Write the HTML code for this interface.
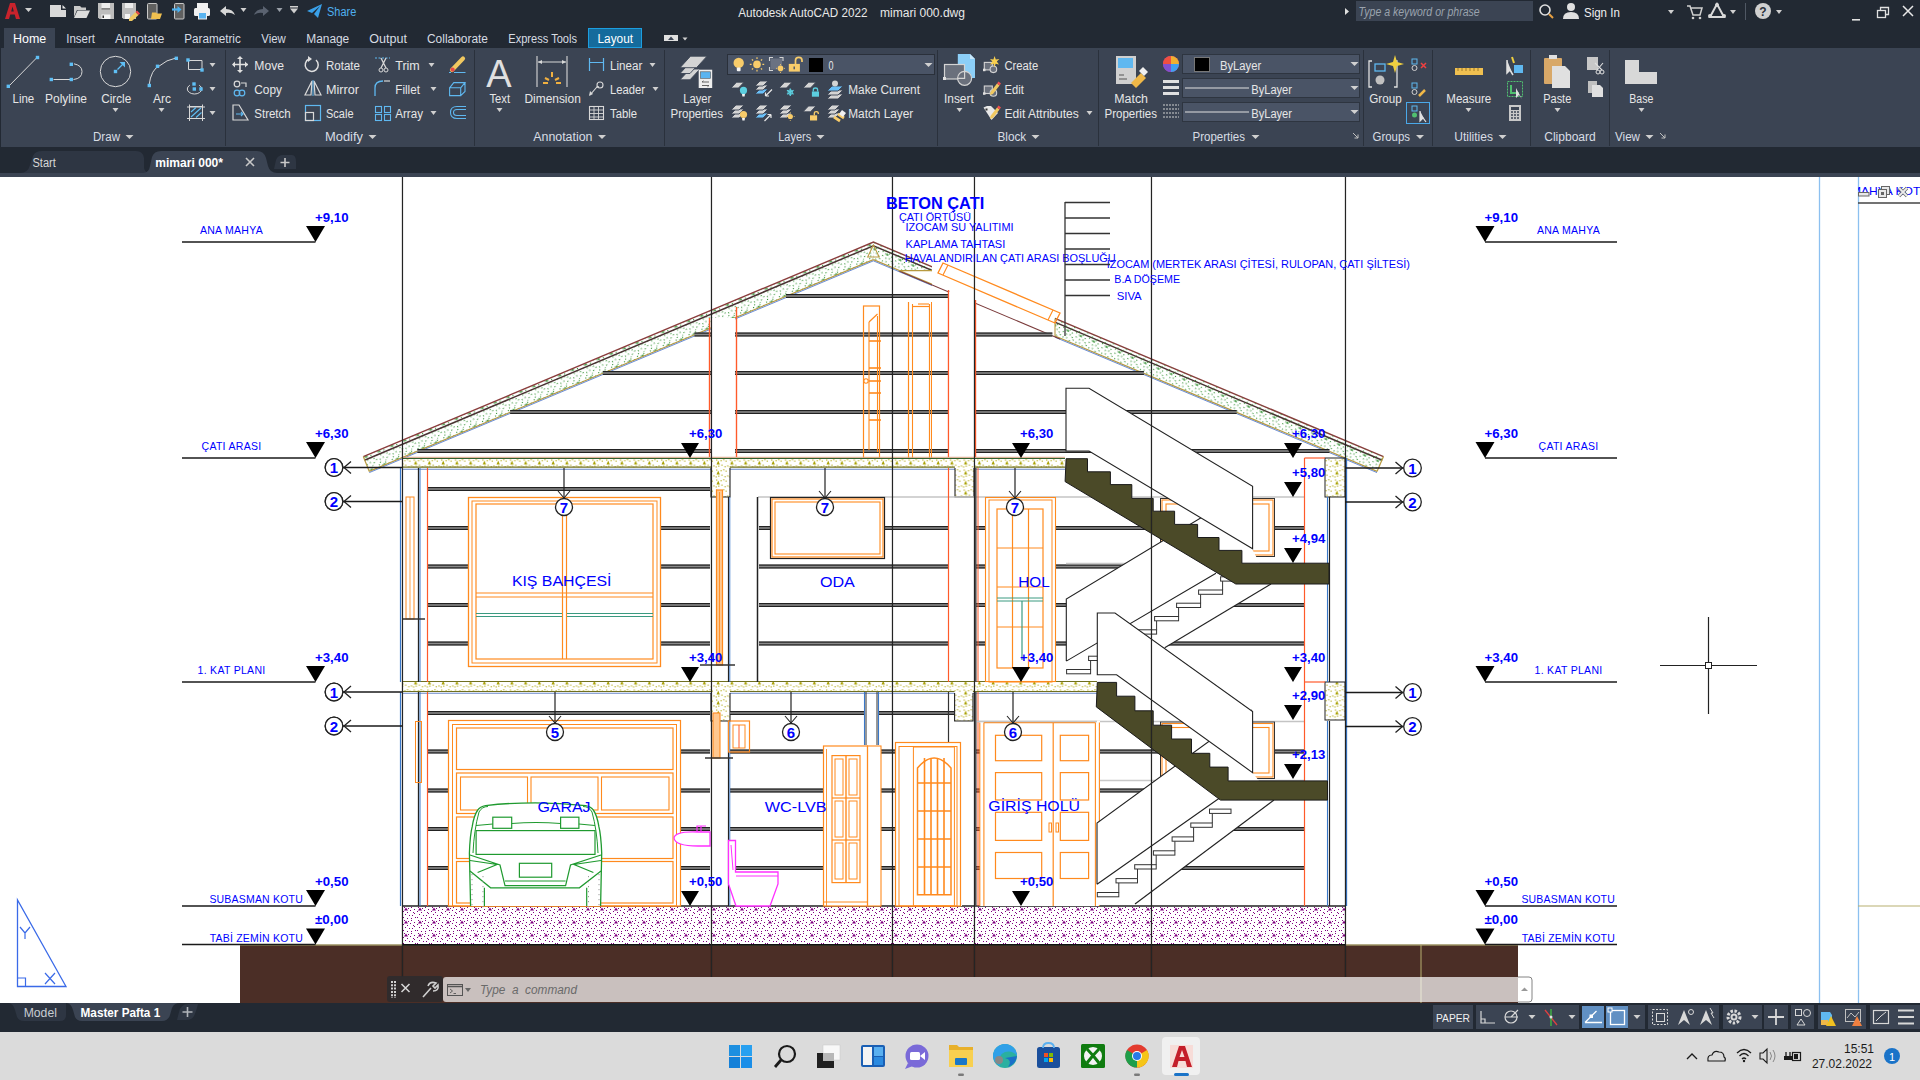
<!DOCTYPE html>
<html><head><meta charset="utf-8"><style>
html,body{margin:0;padding:0;width:1920px;height:1080px;overflow:hidden;background:#222933;}
svg{position:absolute;left:0;top:0;font-family:"Liberation Sans", sans-serif;}
</style></head><body>
<svg width="1920" height="1080" viewBox="0 0 1920 1080">
<g id="chrome"><rect x="0" y="0" width="1920" height="177" fill="#222933"/>
<rect x="1" y="48" width="1919" height="99" fill="#3b4453"/>
<rect x="4" y="28" width="51" height="20" fill="#3b4453"/>
<rect x="588.5" y="28.5" width="53" height="19" fill="#156b9c" stroke="#1c9ee0" stroke-width="1"/>
<rect x="0" y="173" width="1920" height="4" fill="#3b4453"/>
<path d="M20 173 Q28 173 30 165 L33 156 Q35 151 42 151 L136 151 Q143 151 144 158 L144 168 Q145 173 150 173 Z" fill="#2e3643"/>
<path d="M143 173 Q149 173 150 166 L152 157 Q154 151 161 151 L257 151 Q264 151 266 158 L268 166 Q270 173 277 173 Z" fill="#3b4453"/>
<path d="M274 169 L276 160 Q278 155 283 155 L292 155 Q296 155 296 162 L296 169 Z" fill="#2e3643"/>
<text x="32.5" y="167" font-size="12.3" fill="#d8d8d8" font-weight="normal" font-style="normal" textLength="23.30" lengthAdjust="spacingAndGlyphs">Start</text>
<text x="155.3" y="167" font-size="12.3" fill="#ffffff" font-weight="bold" font-style="normal" textLength="67.70" lengthAdjust="spacingAndGlyphs">mimari 000*</text>
<path d="M246 158 L254 166 M254 158 L246 166" stroke="#c8c8c8" stroke-width="1.6"/>
<path d="M285 158 L285 167 M280.5 162.5 L289.5 162.5" stroke="#c8c8c8" stroke-width="1.6"/>
<path d="M5 19 L10 3 L15 3 L20 19 L16 19 L14.7 14.5 L10.3 14.5 L9 19 Z M11.2 11.5 L13.8 11.5 L12.5 6.5 Z" fill="#c8232c"/>
<path d="M25.0 8.0L32.0 8.0L28.5 12.0Z" fill="#d0d0d0"/>
<path d="M50 5 L61 5 L61 10 L66 10 L66 17 L50 17 Z" fill="#d9d9d9"/><path d="M62.5 5 L66 8.5 L62.5 8.5 Z" fill="#e8e8e8"/>
<path d="M74 6 L80 6 L81.5 7.5 L86 7.5 L86 10 L77 10 L74 17 Z" fill="#c8c8c8"/><path d="M77.5 10.5 L90 10.5 L86.5 18 L74 18 Z" fill="#dcdcdc"/>
<path d="M98 3 L114 3 L114 19 L99.5 19 L98 17.5 Z" fill="#bdbdbd"/><rect x="101.5" y="3" width="8.5" height="5.5" fill="#ececec"/><rect x="101.5" y="14.5" width="9" height="4.5" fill="#f4f4f4"/><rect x="102.5" y="15.5" width="1.5" height="2.5" fill="#333"/><rect x="101.5" y="8.5" width="8.5" height="0.8" fill="#333"/>
<path d="M122 3 L136 3 L136 19 L123.5 19 L122 17.5 Z" fill="#bdbdbd"/><rect x="125" y="3" width="8" height="5" fill="#ececec"/><rect x="125" y="14" width="5" height="5" fill="#f4f4f4"/><path d="M129 18.5 L135.5 12 L138.5 15 L132 21 L129 21 Z" fill="#f0c860"/><path d="M135.5 12 L137 10.5 L140 13.5 L138.5 15 Z" fill="#e84848"/>
<rect x="147.5" y="3.5" width="9.5" height="15.5" rx="1" fill="#606060" stroke="#c8c8c8" stroke-width="1"/><path d="M152 12.5 L156 12.5 L157 13.5 L162 13.5 L160 19 L151 19 Z" fill="#f0c050"/>
<rect x="174.5" y="3.5" width="9.5" height="15.5" rx="1" fill="#606060" stroke="#c8c8c8" stroke-width="1"/><path d="M172 9.5 L179 9.5" stroke="#4ab0f0" stroke-width="2.2"/><path d="M177.5 6 L181.5 9.5 L177.5 13 Z" fill="#4ab0f0"/>
<rect x="197" y="3" width="11" height="5" fill="#f0f0f0"/><rect x="194" y="8" width="16" height="8" rx="1.5" fill="#f0f0f0"/><rect x="198.5" y="12.5" width="8" height="6.5" fill="#5ab4f0" stroke="#f0f0f0" stroke-width="1"/>
<path d="M220 11 L226 6 L226 9 Q233 9 235 15 Q231 12 226 13 L226 16 Z" fill="#d8d8d8"/>
<path d="M240.5 8.0L246.5 8.0L243.5 12.0Z" fill="#d0d0d0"/>
<path d="M269 11 L263 6 L263 9 Q256 9 254 15 Q258 12 263 13 L263 16 Z" fill="#5a6270"/>
<path d="M276.5 8.0L282.5 8.0L279.5 12.0Z" fill="#9aa0a8"/>
<rect x="290" y="6" width="8" height="1.5" fill="#d0d0d0"/><path d="M290.0 8.5L298.0 8.5L294 13.5Z" fill="#d0d0d0"/>
<path d="M307 11 L322 4 L318 18 L314 14 L320 6 L312 13 Z" fill="#3aa0e8"/>
<text x="327" y="16" font-size="12.3" fill="#4fb0f0" font-weight="normal" font-style="normal" textLength="29.25" lengthAdjust="spacingAndGlyphs">Share</text>
<text x="738.25" y="16.5" font-size="12.3" fill="#e8e8e8" font-weight="normal" font-style="normal" textLength="129.25" lengthAdjust="spacingAndGlyphs">Autodesk AutoCAD 2022</text>
<text x="880" y="16.5" font-size="12.3" fill="#e8e8e8" font-weight="normal" font-style="normal" textLength="85.00" lengthAdjust="spacingAndGlyphs">mimari 000.dwg</text>
<path d="M1345 8 L1349 11.5 L1345 15 Z" fill="#e0e0e0"/>
<rect x="1356" y="1" width="177" height="20" fill="#3b4453"/>
<text x="1358.6" y="15.5" font-size="12" fill="#9aa3ae" font-weight="normal" font-style="italic" textLength="121.10" lengthAdjust="spacingAndGlyphs">Type a keyword or phrase</text>
<circle cx="1545" cy="10" r="5" fill="none" stroke="#e0e0e0" stroke-width="1.6"/><path d="M1549 14 L1553 18" stroke="#e8a040" stroke-width="2"/>
<circle cx="1571" cy="7" r="4" fill="#e0e0e0"/><path d="M1563 19 Q1563 12 1571 12 Q1579 12 1579 19 Z" fill="#e0e0e0"/>
<text x="1584" y="16.5" font-size="12.3" fill="#f0f0f0" font-weight="normal" font-style="normal" textLength="35.80" lengthAdjust="spacingAndGlyphs">Sign In</text>
<path d="M1668.0 10.0L1674.0 10.0L1671 14.0Z" fill="#d0d0d0"/>
<path d="M1687 6 L1690 6 L1693 15 L1700 15 L1702 8 L1691 8" stroke="#d0d0d0" stroke-width="1.5" fill="none"/><circle cx="1693" cy="18" r="1.3" fill="#d0d0d0"/><circle cx="1700" cy="18" r="1.3" fill="#d0d0d0"/>
<path d="M1717 4 L1710 17 L1724 17 Z" stroke="#d8d8d8" stroke-width="2" fill="none"/><circle cx="1717" cy="5" r="2" fill="#d8d8d8"/><circle cx="1710" cy="16" r="2" fill="#d8d8d8"/><circle cx="1724" cy="16" r="2" fill="#d8d8d8"/>
<path d="M1730.0 10.0L1736.0 10.0L1733 14.0Z" fill="#d0d0d0"/>
<rect x="1745" y="3" width="1" height="17" fill="#505864"/>
<circle cx="1763" cy="11" r="8" fill="#d0d0d0"/><text x="1763" y="16" font-size="12" fill="#2a313c" font-weight="bold" font-style="normal" text-anchor="middle" >?</text>
<path d="M1776.0 10.0L1782.0 10.0L1779 14.0Z" fill="#d0d0d0"/>
<rect x="1852" y="19" width="8" height="1.6" fill="#e0e0e0"/>
<rect x="1877.5" y="10.5" width="8" height="7" fill="none" stroke="#e0e0e0" stroke-width="1.3"/><path d="M1880.5 10.5 L1880.5 7.5 L1888.5 7.5 L1888.5 14.5 L1885.5 14.5" fill="none" stroke="#e0e0e0" stroke-width="1.3"/>
<path d="M1903 6 L1913 16 M1913 6 L1903 16" stroke="#e8e8e8" stroke-width="1.5"/>
<text x="13" y="42.5" font-size="12.3" fill="#ffffff" font-weight="normal" font-style="normal" textLength="33.25" lengthAdjust="spacingAndGlyphs">Home</text>
<text x="66.25" y="42.5" font-size="12.3" fill="#d6dbe2" font-weight="normal" font-style="normal" textLength="28.75" lengthAdjust="spacingAndGlyphs">Insert</text>
<text x="115" y="42.5" font-size="12.3" fill="#d6dbe2" font-weight="normal" font-style="normal" textLength="49.25" lengthAdjust="spacingAndGlyphs">Annotate</text>
<text x="184.25" y="42.5" font-size="12.3" fill="#d6dbe2" font-weight="normal" font-style="normal" textLength="56.50" lengthAdjust="spacingAndGlyphs">Parametric</text>
<text x="261.25" y="42.5" font-size="12.3" fill="#d6dbe2" font-weight="normal" font-style="normal" textLength="24.50" lengthAdjust="spacingAndGlyphs">View</text>
<text x="306.25" y="42.5" font-size="12.3" fill="#d6dbe2" font-weight="normal" font-style="normal" textLength="43.00" lengthAdjust="spacingAndGlyphs">Manage</text>
<text x="369.25" y="42.5" font-size="12.3" fill="#d6dbe2" font-weight="normal" font-style="normal" textLength="37.75" lengthAdjust="spacingAndGlyphs">Output</text>
<text x="427" y="42.5" font-size="12.3" fill="#d6dbe2" font-weight="normal" font-style="normal" textLength="61.00" lengthAdjust="spacingAndGlyphs">Collaborate</text>
<text x="508.25" y="42.5" font-size="12.3" fill="#d6dbe2" font-weight="normal" font-style="normal" textLength="68.75" lengthAdjust="spacingAndGlyphs">Express Tools</text>
<text x="597.5" y="42.5" font-size="12.3" fill="#ffffff" font-weight="normal" font-style="normal" textLength="35.50" lengthAdjust="spacingAndGlyphs">Layout</text>
<rect x="664" y="35" width="14" height="6" fill="#e0e0e0"/><path d="M668 40 L671 36.5 L674 40 Z" fill="#3b4453"/>
<path d="M682.5 37.5L687.5 37.5L685 40.5Z" fill="#d0d0d0"/></g>
<g id="ribbon"><rect x="225" y="50" width="1" height="96" fill="#2a313c"/>
<rect x="474" y="50" width="1" height="96" fill="#2a313c"/>
<rect x="664" y="50" width="1" height="96" fill="#2a313c"/>
<rect x="937" y="50" width="1" height="96" fill="#2a313c"/>
<rect x="1098" y="50" width="1" height="96" fill="#2a313c"/>
<rect x="1363" y="50" width="1" height="96" fill="#2a313c"/>
<rect x="1432" y="50" width="1" height="96" fill="#2a313c"/>
<rect x="1530" y="50" width="1" height="96" fill="#2a313c"/>
<rect x="1609" y="50" width="1" height="96" fill="#2a313c"/>
<text x="93" y="141.25" font-size="12.3" fill="#d8dde4" font-weight="normal" font-style="normal" textLength="27.00" lengthAdjust="spacingAndGlyphs">Draw</text>
<text x="325" y="141.25" font-size="12.3" fill="#d8dde4" font-weight="normal" font-style="normal" textLength="38.00" lengthAdjust="spacingAndGlyphs">Modify</text>
<text x="533.25" y="141.25" font-size="12.3" fill="#d8dde4" font-weight="normal" font-style="normal" textLength="59.25" lengthAdjust="spacingAndGlyphs">Annotation</text>
<text x="778.25" y="141.25" font-size="12.3" fill="#d8dde4" font-weight="normal" font-style="normal" textLength="33.00" lengthAdjust="spacingAndGlyphs">Layers</text>
<text x="997.5" y="141.25" font-size="12.3" fill="#d8dde4" font-weight="normal" font-style="normal" textLength="28.75" lengthAdjust="spacingAndGlyphs">Block</text>
<text x="1192.5" y="141.25" font-size="12.3" fill="#d8dde4" font-weight="normal" font-style="normal" textLength="52.50" lengthAdjust="spacingAndGlyphs">Properties</text>
<text x="1372.5" y="141.25" font-size="12.3" fill="#d8dde4" font-weight="normal" font-style="normal" textLength="37.50" lengthAdjust="spacingAndGlyphs">Groups</text>
<text x="1454.25" y="141.25" font-size="12.3" fill="#d8dde4" font-weight="normal" font-style="normal" textLength="38.75" lengthAdjust="spacingAndGlyphs">Utilities</text>
<text x="1544.25" y="141.25" font-size="12.3" fill="#d8dde4" font-weight="normal" font-style="normal" textLength="51.50" lengthAdjust="spacingAndGlyphs">Clipboard</text>
<text x="1615" y="141.25" font-size="12.3" fill="#d8dde4" font-weight="normal" font-style="normal" textLength="25.00" lengthAdjust="spacingAndGlyphs">View</text>
<path d="M125.5 135.0L133.5 135.0L129.5 139.0Z" fill="#d0d0d0"/>
<path d="M368.5 135.0L376.5 135.0L372.5 139.0Z" fill="#d0d0d0"/>
<path d="M598.0 135.0L606.0 135.0L602 139.0Z" fill="#d0d0d0"/>
<path d="M816.5 135.0L824.5 135.0L820.5 139.0Z" fill="#d0d0d0"/>
<path d="M1031.5 135.0L1039.5 135.0L1035.5 139.0Z" fill="#d0d0d0"/>
<path d="M1251.5 135.0L1259.5 135.0L1255.5 139.0Z" fill="#d0d0d0"/>
<path d="M1416.0 135.0L1424.0 135.0L1420 139.0Z" fill="#d0d0d0"/>
<path d="M1498.5 135.0L1506.5 135.0L1502.5 139.0Z" fill="#d0d0d0"/>
<path d="M1645.5 135.0L1653.5 135.0L1649.5 139.0Z" fill="#d0d0d0"/>
<path d="M1353 133 L1358 138 M1354.5 138 L1358 138 L1358 134.5" stroke="#c0c0c0" stroke-width="1" fill="none"/>
<path d="M1660 133 L1665 138 M1661.5 138 L1665 138 L1665 134.5" stroke="#c0c0c0" stroke-width="1" fill="none"/>
<path d="M8.5 86.5 L36.5 58" stroke="#d8d8d8" stroke-width="1"/><rect x="6.6000000000000005" y="84.6" width="3.4" height="3.4" fill="#5fbff5"/><rect x="35.8" y="55.8" width="3.4" height="3.4" fill="#5fbff5"/>
<text x="12.5" y="103.25" font-size="12.3" fill="#e6e6e6" font-weight="normal" font-style="normal" textLength="21.75" lengthAdjust="spacingAndGlyphs">Line</text>
<path d="M53.5 79.5 L70.5 79.5 M74 63.8 Q82 65.5 82 71.5 Q82 78.5 73.5 79.5" stroke="#d8d8d8" stroke-width="1" fill="none"/><rect x="49.599999999999994" y="77.8" width="3.4" height="3.4" fill="#5fbff5"/><rect x="69.6" y="77.8" width="3.4" height="3.4" fill="#5fbff5"/><rect x="69.6" y="62.599999999999994" width="3.4" height="3.4" fill="#5fbff5"/>
<text x="45" y="103.25" font-size="12.3" fill="#e6e6e6" font-weight="normal" font-style="normal" textLength="42.00" lengthAdjust="spacingAndGlyphs">Polyline</text>
<circle cx="115.5" cy="71.5" r="15.2" fill="none" stroke="#d8d8d8" stroke-width="1"/><rect x="113.8" y="69.8" width="3.4" height="3.4" fill="#5fbff5"/><path d="M117.5 69.5 L123.5 63.5" stroke="#5fbff5" stroke-width="1.2"/><path d="M119.5 62 L125 62 L125 67.5 Z" fill="#5fbff5"/>
<text x="101.25" y="103.25" font-size="12.3" fill="#e6e6e6" font-weight="normal" font-style="normal" textLength="30.00" lengthAdjust="spacingAndGlyphs">Circle</text>
<path d="M112.5 108.0L118.5 108.0L115.5 112.0Z" fill="#d0d0d0"/>
<path d="M149 85.5 Q151 69 160 65.5 Q166 60 176 58" stroke="#d8d8d8" stroke-width="1" fill="none"/><rect x="147.60000000000002" y="83.8" width="3.4" height="3.4" fill="#5fbff5"/><rect x="155.8" y="64.6" width="3.4" height="3.4" fill="#5fbff5"/><rect x="174.60000000000002" y="56.599999999999994" width="3.4" height="3.4" fill="#5fbff5"/>
<text x="153" y="103.25" font-size="12.3" fill="#e6e6e6" font-weight="normal" font-style="normal" textLength="18.00" lengthAdjust="spacingAndGlyphs">Arc</text>
<path d="M158.5 108.0L164.5 108.0L161.5 112.0Z" fill="#d0d0d0"/>
<path d="M188.5 60.5 L202 60.5 L202 69.5 L188.5 69.5 Z" fill="none" stroke="#d8d8d8" stroke-width="1"/><rect x="186.3" y="58.3" width="3.4" height="3.4" fill="#5fbff5"/><rect x="200.3" y="68.3" width="3.4" height="3.4" fill="#5fbff5"/>
<path d="M209.5 63.0L215.5 63.0L212.5 67.0Z" fill="#d0d0d0"/>
<ellipse cx="194.5" cy="89" rx="7.2" ry="5" fill="none" stroke="#d8d8d8" stroke-width="1"/><rect x="190" y="83" width="9" height="3" fill="#3b4453"/><rect x="192.3" y="82.3" width="3.4" height="3.4" fill="#5fbff5"/><rect x="192.60000000000002" y="87.3" width="3.4" height="3.4" fill="#5fbff5"/><rect x="199.3" y="87.3" width="3.4" height="3.4" fill="#5fbff5"/>
<path d="M209.5 87.0L215.5 87.0L212.5 91.0Z" fill="#d0d0d0"/>
<rect x="189.5" y="106.5" width="13" height="12" fill="none" stroke="#d8d8d8" stroke-width="1"/><path d="M187 107 L205 107 M187 118.5 L205 118.5 M189.5 104.5 L189.5 121 M202.5 104.5 L202.5 121" stroke="#d8d8d8" stroke-width="1"/><path d="M191 112 L196 107.5 M191 117 L201 108 M196 117.5 L201.5 112.5" stroke="#5fbff5" stroke-width="1.1"/>
<path d="M209.5 111.0L215.5 111.0L212.5 115.0Z" fill="#d0d0d0"/>
<text x="254.25" y="69.5" font-size="12.3" fill="#e6e6e6" font-weight="normal" font-style="normal" textLength="29.75" lengthAdjust="spacingAndGlyphs">Move</text>
<text x="254.25" y="93.5" font-size="12.3" fill="#e6e6e6" font-weight="normal" font-style="normal" textLength="27.75" lengthAdjust="spacingAndGlyphs">Copy</text>
<text x="254.25" y="117.5" font-size="12.3" fill="#e6e6e6" font-weight="normal" font-style="normal" textLength="36.50" lengthAdjust="spacingAndGlyphs">Stretch</text>
<text x="326" y="69.5" font-size="12.3" fill="#e6e6e6" font-weight="normal" font-style="normal" textLength="34.00" lengthAdjust="spacingAndGlyphs">Rotate</text>
<text x="326" y="93.5" font-size="12.3" fill="#e6e6e6" font-weight="normal" font-style="normal" textLength="33.00" lengthAdjust="spacingAndGlyphs">Mirror</text>
<text x="326" y="117.5" font-size="12.3" fill="#e6e6e6" font-weight="normal" font-style="normal" textLength="27.50" lengthAdjust="spacingAndGlyphs">Scale</text>
<text x="395.25" y="69.5" font-size="12.3" fill="#e6e6e6" font-weight="normal" font-style="normal" textLength="24.50" lengthAdjust="spacingAndGlyphs">Trim</text>
<text x="395.25" y="93.5" font-size="12.3" fill="#e6e6e6" font-weight="normal" font-style="normal" textLength="24.75" lengthAdjust="spacingAndGlyphs">Fillet</text>
<text x="395.25" y="117.5" font-size="12.3" fill="#e6e6e6" font-weight="normal" font-style="normal" textLength="27.75" lengthAdjust="spacingAndGlyphs">Array</text>
<path d="M428.5 63.0L434.5 63.0L431.5 67.0Z" fill="#d0d0d0"/>
<path d="M430.5 87.0L436.5 87.0L433.5 91.0Z" fill="#d0d0d0"/>
<path d="M430.5 111.0L436.5 111.0L433.5 115.0Z" fill="#d0d0d0"/>
<path d="M240 57 L240 72 M233 64.5 L248 64.5" stroke="#e0e0e0" stroke-width="1.6"/><path d="M237 59 L240 56 L243 59 Z M237 70 L240 73 L243 70 Z M235 61.5 L232 64.5 L235 67.5 Z M245 61.5 L248 64.5 L245 67.5 Z" fill="#e0e0e0"/>
<circle cx="237" cy="84" r="2.8" fill="none" stroke="#d8d8d8" stroke-width="1.2"/><circle cx="237" cy="93" r="2.8" fill="none" stroke="#5fb8f0" stroke-width="1.2"/><circle cx="242" cy="93" r="2.8" fill="none" stroke="#5fb8f0" stroke-width="1.2"/><path d="M241 83 L246 83 L246 87" stroke="#d8d8d8" stroke-width="1.2" fill="none"/>
<path d="M233 105 L239 105 L248 120 L233 120 Z" fill="none" stroke="#d8d8d8" stroke-width="1.2"/><path d="M236 114 L243 114 M241 112 L243 114 L241 116" stroke="#5fb8f0" stroke-width="1.2" fill="none"/>
<path d="M316 60 A6.5 6.5 0 1 1 309 59" stroke="#e0e0e0" stroke-width="1.5" fill="none"/><path d="M308 56 L312 59 L308 62 Z" fill="#e0e0e0"/>
<path d="M312 81 L305 95 L311 95 Z M314 81 L321 95 L315 95 Z" fill="none" stroke="#d8d8d8" stroke-width="1.2"/><path d="M313 80 L313 96" stroke="#5fb8f0" stroke-width="1"/>
<rect x="305.5" y="105.5" width="15" height="15" fill="none" stroke="#5fb8f0" stroke-width="1.2"/><rect x="305.5" y="112.5" width="8" height="8" fill="none" stroke="#d8d8d8" stroke-width="1.2"/>
<path d="M375 58 L390 58" stroke="#5fb8f0" stroke-width="1" stroke-dasharray="2 1.5"/><path d="M381 58 L386 68 M386 58 L381 68" stroke="#d8d8d8" stroke-width="1.3"/><circle cx="381" cy="70" r="2" fill="none" stroke="#d8d8d8"/><circle cx="386" cy="70" r="2" fill="none" stroke="#d8d8d8"/>
<path d="M375 96 L375 88 Q375 81 383 81" stroke="#5fb8f0" stroke-width="1.3" fill="none"/><path d="M384 81 L390 81" stroke="#d8d8d8" stroke-width="1.2"/>
<rect x="375.5" y="106.5" width="6" height="6" fill="none" stroke="#5fb8f0" stroke-width="1.1"/><rect x="384.5" y="106.5" width="6" height="6" fill="none" stroke="#5fb8f0" stroke-width="1.1"/><rect x="375.5" y="114.5" width="6" height="6" fill="none" stroke="#5fb8f0" stroke-width="1.1"/><rect x="384.5" y="114.5" width="6" height="6" fill="none" stroke="#5fb8f0" stroke-width="1.1"/>
<path d="M452 70 L463 58.5" stroke="#f0c860" stroke-width="4.2" stroke-linecap="round"/><circle cx="452.6" cy="69.6" r="2.1" fill="#e84848"/><path d="M449 72.5 L451 72.5 M454 72.5 L465.5 72.5" stroke="#5fb8f0" stroke-width="1"/>
<path d="M449.6 87.8 L460.7 87.8 L460.7 95.6 L449.6 95.6 Z M449.6 87.8 L453.8 82.6 L465 82.6 L460.7 87.8 M465 82.6 L465 91.5 L460.7 95.6" fill="none" stroke="#5fb8f0" stroke-width="1.1"/>
<path d="M466 106.5 L457 106.5 Q450.5 106.5 450.5 112.5 Q450.5 118.5 457 118.5 L466 118.5 M466 109.5 L457 109.5 Q453.5 109.5 453.5 112.5 Q453.5 115.5 457 115.5 L466 115.5" fill="none" stroke="#5fb8f0" stroke-width="1.1"/>
<text x="499" y="87" font-size="38" fill="#e0e0e0" font-weight="normal" font-style="normal" text-anchor="middle" >A</text>
<text x="489.5" y="103.25" font-size="12.3" fill="#e6e6e6" font-weight="normal" font-style="normal" textLength="20.50" lengthAdjust="spacingAndGlyphs">Text</text>
<path d="M496.5 108.0L502.5 108.0L499.5 112.0Z" fill="#d0d0d0"/>
<path d="M537 56 L537 87 M567 56 L567 87 M538 62 L566 62" stroke="#d8d8d8" stroke-width="1.1"/><path d="M538 62 L542 60 L542 64 Z M566 62 L562 60 L562 64 Z" fill="#d8d8d8"/>
<path d="M552 72 L552 77 M545 78 L549 80 M559 78 L555 80 M543 83 L548 83 M561 83 L556 83" stroke="#f0b040" stroke-width="2"/>
<text x="524.5" y="103.25" font-size="12.3" fill="#e6e6e6" font-weight="normal" font-style="normal" textLength="56.25" lengthAdjust="spacingAndGlyphs">Dimension</text>
<path d="M589.5 58 L589.5 71 M603.5 58 L603.5 71 M590 62.5 L603 62.5" stroke="#5fb8f0" stroke-width="1.2"/>
<text x="610" y="69.5" font-size="12.3" fill="#e6e6e6" font-weight="normal" font-style="normal" textLength="32.25" lengthAdjust="spacingAndGlyphs">Linear</text>
<path d="M649.5 63.0L655.5 63.0L652.5 67.0Z" fill="#d0d0d0"/>
<path d="M590 95 L596 88 Q597 86 599 87" stroke="#d8d8d8" stroke-width="1.1" fill="none"/><circle cx="600" cy="85" r="3" fill="none" stroke="#d8d8d8" stroke-width="1.1"/><path d="M589 96 L590 91 L593 94 Z" fill="#d8d8d8"/>
<text x="610" y="93.5" font-size="12.3" fill="#e6e6e6" font-weight="normal" font-style="normal" textLength="35.00" lengthAdjust="spacingAndGlyphs">Leader</text>
<path d="M652.5 87.0L658.5 87.0L655.5 91.0Z" fill="#d0d0d0"/>
<rect x="589.5" y="106.5" width="14" height="13" fill="none" stroke="#d8d8d8" stroke-width="1.1"/><path d="M590 110 L603 110 M590 113.5 L603 113.5 M590 117 L603 117 M594 107 L594 119 M598.5 107 L598.5 119" stroke="#d8d8d8" stroke-width="0.9"/>
<text x="610" y="117.5" font-size="12.3" fill="#e6e6e6" font-weight="normal" font-style="normal" textLength="27.00" lengthAdjust="spacingAndGlyphs">Table</text>
<path d="M680 79.8 L690 69 L700 69 L690 79.8 Z" fill="#d4d4d4" stroke="#3b4453" stroke-width="0.9"/><path d="M680 73.5 L690 62.5 L700 62.5 L690 73.5 Z" fill="#d4d4d4" stroke="#3b4453" stroke-width="0.9"/><path d="M680 67.7 L690.5 56.2 L707 56.2 L696.5 67.7 Z" fill="#d4d4d4" stroke="#3b4453" stroke-width="0.9"/>
<rect x="698.7" y="69.7" width="13.5" height="18.3" fill="#eeeeee"/><rect x="700.5" y="71.8" width="10" height="6.5" fill="#5ab4f0" stroke="#555" stroke-width="0.6"/><path d="M702 82 L709 82 M702 85.5 L709 85.5" stroke="#555" stroke-width="0.9"/><path d="M702 82 L703.5 80.8 M709 85.5 L707.5 86.7" stroke="#555" stroke-width="0.9"/>
<text x="683.25" y="103.25" font-size="12.3" fill="#e6e6e6" font-weight="normal" font-style="normal" textLength="28.00" lengthAdjust="spacingAndGlyphs">Layer</text>
<text x="670.5" y="118" font-size="12.3" fill="#e6e6e6" font-weight="normal" font-style="normal" textLength="52.50" lengthAdjust="spacingAndGlyphs">Properties</text>
<rect x="727.5" y="54.5" width="207" height="20" fill="#4a5466" stroke="#2a303a" stroke-width="1"/>
<circle cx="738.7" cy="62.9" r="5.2" fill="#f8cc6a"/><rect x="736.8" y="67.5" width="3.8" height="3.8" rx="1" fill="#f4f4f4"/>
<circle cx="757" cy="64.4" r="3.8" fill="#f8cc6a"/><path d="M757 57.2 L757 59 M757 69.8 L757 71.6 M749.8 64.4 L751.6 64.4 M762.4 64.4 L764.2 64.4 M751.9 59.3 L753.1 60.5 M762.1 59.3 L760.9 60.5 M751.9 69.5 L753.1 68.3 M762.1 69.5 L760.9 68.3" stroke="#f8cc6a" stroke-width="1.2"/>
<rect x="770.5" y="58.5" width="11.5" height="11" fill="#6a7282"/><path d="M769.5 61 L769.5 57.5 L773 57.5 M779.5 57.5 L783 57.5 L783 61 M769.5 67 L769.5 70.5 L773 70.5" fill="none" stroke="#d4d4d4" stroke-width="1.1"/><circle cx="780.5" cy="68.4" r="2.8" fill="#f8cc6a"/><path d="M780.5 64 L780.5 64.8 M780.5 72 L780.5 72.8 M776.1 68.4 L776.9 68.4 M784.1 68.4 L784.9 68.4" stroke="#f8cc6a" stroke-width="1"/>
<rect x="788.8" y="63.9" width="11.1" height="7.7" fill="#f8cc6a"/><path d="M795.5 64 L795.5 60.5 Q795.5 57.3 798.8 57.3 Q802 57.3 802 60.5 L802 62" fill="none" stroke="#f8cc6a" stroke-width="1.7"/><rect x="793.5" y="66.5" width="1.4" height="2.8" fill="#4a5466"/>
<rect x="809" y="58" width="14" height="14" fill="#000"/>
<text x="828.5" y="69.5" font-size="12.3" fill="#e6e6e6" font-weight="normal" font-style="normal" textLength="5.00" lengthAdjust="spacingAndGlyphs">0</text>
<path d="M924.5 63.0L932.5 63.0L928.5 67.0Z" fill="#d0d0d0"/>
<path d="M731 88.0 L736.5 82.2 L744 82.2 L738.5 88.0 Z" fill="#d4d4d4" stroke="#3b4453" stroke-width="0.9"/><circle cx="743.5" cy="90.4" r="3.6" fill="#5ccfe0"/><path d="M742 94 L745 94 L744.6 96.5 L742.4 96.5 Z" fill="#f4f4f4"/>
<path d="M755 94 L760 89 L768 89 L763 94 Z" fill="#6ac0f8" stroke="#3b4453" stroke-width="0.9"/><path d="M755 90 L760 85 L768 85 L763 90 Z" fill="#d4d4d4" stroke="#3b4453" stroke-width="0.9"/><path d="M755 86 L760 81 L768 81 L763 86 Z" fill="#d4d4d4" stroke="#3b4453" stroke-width="0.9"/><path d="M772 89.5 L765.5 96 M765.5 96 L765.5 92.5 M765.5 96 L769 96" stroke="#e8e8e8" stroke-width="1.2" fill="none"/>
<path d="M779 88.0 L784.5 82.2 L792 82.2 L786.5 88.0 Z" fill="#d4d4d4" stroke="#3b4453" stroke-width="0.9"/><path d="M790.3 88.5 L790.3 96 M787 90.3 L793.6 94.2 M787 94.2 L793.6 90.3" stroke="#5ccfe0" stroke-width="1.3"/><circle cx="790.3" cy="92.2" r="2.3" fill="none" stroke="#5ccfe0" stroke-width="1"/>
<path d="M803 88.0 L808.5 82.2 L816 82.2 L810.5 88.0 Z" fill="#d4d4d4" stroke="#3b4453" stroke-width="0.9"/><rect x="811.9" y="91.5" width="7.1" height="5.2" fill="#5ccfe0"/><path d="M813.3 91.5 L813.3 89.8 Q813.3 88 815.45 88 Q817.6 88 817.6 89.8 L817.6 91.5" fill="none" stroke="#5ccfe0" stroke-width="1.3"/>
<path d="M827 99 L832 94 L843 94 L838 99 Z" fill="#d4d4d4" stroke="#3b4453" stroke-width="0.9"/><path d="M827 95 L832 90 L843 90 L838 95 Z" fill="#d4d4d4" stroke="#3b4453" stroke-width="0.9"/><path d="M827 91 L832 86 L843 86 L838 91 Z" fill="#6ac0f8" stroke="#3b4453" stroke-width="0.9"/><circle cx="835" cy="83.6" r="3" fill="#d4d4d4"/>
<path d="M731 118 L736 113 L744 113 L739 118 Z" fill="#d4d4d4" stroke="#3b4453" stroke-width="0.9"/><path d="M731 114 L736 109 L744 109 L739 114 Z" fill="#d4d4d4" stroke="#3b4453" stroke-width="0.9"/><path d="M731 110 L736 105 L744 105 L739 110 Z" fill="#d4d4d4" stroke="#3b4453" stroke-width="0.9"/><circle cx="743.5" cy="114.5" r="3.6" fill="#f8cc6a"/><path d="M742 118 L745 118 L744.6 120.5 L742.4 120.5 Z" fill="#f4f4f4"/>
<path d="M755 118 L760 113 L768 113 L763 118 Z" fill="#6ac0f8" stroke="#3b4453" stroke-width="0.9"/><path d="M755 114 L760 109 L768 109 L763 114 Z" fill="#d4d4d4" stroke="#3b4453" stroke-width="0.9"/><path d="M755 110 L760 105 L768 105 L763 110 Z" fill="#d4d4d4" stroke="#3b4453" stroke-width="0.9"/><path d="M764.5 121 L771 114.5 M771 114.5 L767.5 114.5 M771 114.5 L771 118" stroke="#e8e8e8" stroke-width="1.2" fill="none"/>
<path d="M779 118 L784 113 L792 113 L787 118 Z" fill="#d4d4d4" stroke="#3b4453" stroke-width="0.9"/><path d="M779 114 L784 109 L792 109 L787 114 Z" fill="#d4d4d4" stroke="#3b4453" stroke-width="0.9"/><path d="M779 110 L784 105 L792 105 L787 110 Z" fill="#d4d4d4" stroke="#3b4453" stroke-width="0.9"/><circle cx="790.3" cy="116.5" r="2.6" fill="#f8cc6a"/><path d="M790.3 112.3 L790.3 113 M790.3 120 L790.3 120.7 M786.1 116.5 L786.8 116.5 M793.8 116.5 L794.5 116.5" stroke="#f8cc6a" stroke-width="1"/>
<path d="M803 111.8 L808.5 106 L816 106 L810.5 111.8 Z" fill="#d4d4d4" stroke="#3b4453" stroke-width="0.9"/><rect x="810" y="115.3" width="7.1" height="5.2" fill="#f8cc6a"/><path d="M814.3 115.3 L814.3 113.4 Q814.3 111.6 816.3 111.6 Q818.3 111.6 818.3 113.4 L818.3 114" fill="none" stroke="#f8cc6a" stroke-width="1.3"/>
<path d="M827 118 L832 113 L840 113 L835 118 Z" fill="#d4d4d4" stroke="#3b4453" stroke-width="0.9"/><path d="M827 114 L832 109 L840 109 L835 114 Z" fill="#d4d4d4" stroke="#3b4453" stroke-width="0.9"/><path d="M827 110 L832 105 L840 105 L835 110 Z" fill="#d4d4d4" stroke="#3b4453" stroke-width="0.9"/><path d="M834 117 L840 121 M838 114 L844 118" stroke="#f8cc6a" stroke-width="2.8"/><path d="M839 114 L842 110 L846 113 L843 117 Z" fill="#f0f0f0"/>
<text x="848.25" y="93.5" font-size="12.3" fill="#e6e6e6" font-weight="normal" font-style="normal" textLength="71.75" lengthAdjust="spacingAndGlyphs">Make Current</text>
<text x="848.25" y="117.5" font-size="12.3" fill="#e6e6e6" font-weight="normal" font-style="normal" textLength="65.00" lengthAdjust="spacingAndGlyphs">Match Layer</text>
<path d="M957.8 54 L970 54 L975 59 L975 78 L957.8 78 Z" fill="#8ccff8"/><path d="M970 54 L975 59 L970 59 Z" fill="#c8e8fc"/>
<rect x="944.5" y="64.5" width="20" height="14.5" fill="#6a707c" stroke="#d4d4d4" stroke-width="1.2"/><rect x="943" y="77" width="3" height="3" fill="#e0e0e0"/>
<circle cx="964.6" cy="78.3" r="7" fill="#6a707c" stroke="#d4d4d4" stroke-width="1.2"/><path d="M957.6 78.3 L964.6 78.3 L964.6 71.3" fill="none" stroke="#d4d4d4" stroke-width="1.2"/>
<text x="944" y="103.25" font-size="12.3" fill="#e6e6e6" font-weight="normal" font-style="normal" textLength="29.75" lengthAdjust="spacingAndGlyphs">Insert</text>
<path d="M956.5 108.0L962.5 108.0L959.5 112.0Z" fill="#d0d0d0"/>
<rect x="984.3" y="62.4" width="8" height="7.5" fill="#6a707c" stroke="#d4d4d4" stroke-width="1.1"/><rect x="983" y="68.7" width="2.5" height="2.5" fill="#e0e0e0"/><circle cx="993.4" cy="69.3" r="3.3" fill="#6a707c" stroke="#d4d4d4" stroke-width="1.1"/>
<rect x="984.3" y="86.0" width="8" height="7.5" fill="#6a707c" stroke="#d4d4d4" stroke-width="1.1"/><rect x="983" y="92.3" width="2.5" height="2.5" fill="#e0e0e0"/><circle cx="993.4" cy="92.9" r="3.3" fill="#6a707c" stroke="#d4d4d4" stroke-width="1.1"/>
<path d="M994.6 56 L995.8 59.6 L999.4 59 L996.8 61.6 L999 64.6 L995.6 63.8 L994.6 67.2 L993.4 63.8 L990 64.6 L992.4 61.6 L990 59 L993.4 59.6 Z" fill="#f8d050"/>
<text x="1004.5" y="69.5" font-size="12.3" fill="#e6e6e6" font-weight="normal" font-style="normal" text-anchor="start" ></text><text x="1004.5" y="69.5" font-size="12.3" fill="#e6e6e6" font-weight="normal" font-style="normal" textLength="33.75" lengthAdjust="spacingAndGlyphs">Create</text>
<path d="M990.5 92 L997 83.5 L999.5 85.5 L993 94 L990 95 Z" fill="#f0c860"/><path d="M997 83.5 L998.5 81.5 L1001 83.5 L999.5 85.5 Z" fill="#f05050"/>
<text x="1004.5" y="93.5" font-size="12.3" fill="#e6e6e6" font-weight="normal" font-style="normal" textLength="19.25" lengthAdjust="spacingAndGlyphs">Edit</text>
<path d="M983.5 107.5 L987 106 L991 106 L998 113 L991.5 120 Z" fill="#e8e8e8"/><rect x="985.5" y="108.5" width="2" height="2" fill="#333"/><path d="M990.5 116 L997 107.5 L999.5 109.5 L993 118 L990 119 Z" fill="#f0c860"/><path d="M997 107.5 L998.5 105.5 L1001 107.5 L999.5 109.5 Z" fill="#f05050"/>
<text x="1004.5" y="117.5" font-size="12.3" fill="#e6e6e6" font-weight="normal" font-style="normal" textLength="74.25" lengthAdjust="spacingAndGlyphs">Edit Attributes</text>
<path d="M1086.5 111.0L1092.5 111.0L1089.5 115.0Z" fill="#d0d0d0"/>
<rect x="1116" y="56" width="20" height="28" fill="#d0d0d0"/><rect x="1118" y="58" width="15" height="10" fill="#5fb8f0"/><path d="M1119 75 L1124 75 M1119 79 L1127 79" stroke="#555" stroke-width="1"/><path d="M1131 83 L1141 73 L1146 78 L1136 88 Z" fill="#f0b848"/><path d="M1139 71 L1143 67 L1148 72 L1144 76 Z" fill="#f0f0f0"/>
<text x="1114.25" y="103.25" font-size="12.3" fill="#e6e6e6" font-weight="normal" font-style="normal" textLength="33.75" lengthAdjust="spacingAndGlyphs">Match</text>
<text x="1104.5" y="118" font-size="12.3" fill="#e6e6e6" font-weight="normal" font-style="normal" textLength="52.50" lengthAdjust="spacingAndGlyphs">Properties</text>
<circle cx="1171" cy="64" r="8" fill="#d040a0"/><path d="M1171 64 L1171 56 A8 8 0 0 1 1179 64 Z" fill="#f0b030"/><path d="M1171 64 L1179 64 A8 8 0 0 1 1171 72 Z" fill="#40a0f0"/><path d="M1171 64 L1171 72 A8 8 0 0 1 1163 64 Z" fill="#8050d0"/><path d="M1171 64 L1163 64 A8 8 0 0 1 1171 56 Z" fill="#f05040"/>
<rect x="1182.5" y="54.5" width="177" height="19" fill="#4a5466" stroke="#2e3540" stroke-width="1"/>
<path d="M1350.5 62.0L1358.5 62.0L1354.5 66.0Z" fill="#d0d0d0"/>
<rect x="1182.5" y="78.5" width="177" height="19" fill="#4a5466" stroke="#2e3540" stroke-width="1"/>
<path d="M1350.5 86.0L1358.5 86.0L1354.5 90.0Z" fill="#d0d0d0"/>
<rect x="1182.5" y="102.5" width="177" height="19" fill="#4a5466" stroke="#2e3540" stroke-width="1"/>
<path d="M1350.5 110.0L1358.5 110.0L1354.5 114.0Z" fill="#d0d0d0"/>
<rect x="1194.5" y="57.5" width="15" height="14" fill="#000" stroke="#777" stroke-width="1"/>
<text x="1220" y="69.5" font-size="12.3" fill="#e6e6e6" font-weight="normal" font-style="normal" textLength="41.25" lengthAdjust="spacingAndGlyphs">ByLayer</text>
<path d="M1185 88 L1249 88" stroke="#e0e0e0" stroke-width="1"/><text x="1251.25" y="93.5" font-size="12.3" fill="#e6e6e6" font-weight="normal" font-style="normal" textLength="40.75" lengthAdjust="spacingAndGlyphs">ByLayer</text>
<path d="M1185 112 L1249 112" stroke="#e0e0e0" stroke-width="1"/><text x="1251.25" y="117.5" font-size="12.3" fill="#e6e6e6" font-weight="normal" font-style="normal" textLength="40.75" lengthAdjust="spacingAndGlyphs">ByLayer</text>
<rect x="1163" y="80" width="16" height="3" fill="#e0e0e0"/><rect x="1163" y="86" width="16" height="3" fill="#e0e0e0"/><rect x="1163" y="92" width="16" height="3" fill="#e0e0e0"/>
<path d="M1163 105 L1179 105 M1163 109 L1179 109 M1163 113 L1179 113 M1163 117 L1179 117" stroke="#d0d0d0" stroke-width="1.2" stroke-dasharray="2 1"/>
<path d="M1372 61 L1369 61 L1369 87 L1372 87 M1394 61 L1397 61 L1397 87 L1394 87" stroke="#e0e0e0" stroke-width="1.3" fill="none"/><rect x="1375" y="64" width="10" height="7" fill="none" stroke="#5fb8f0" stroke-width="1.3"/><circle cx="1380" cy="80" r="4.5" fill="#c0c0c0"/><path d="M1395 55 L1397 62 L1404 64 L1397 66 L1395 73 L1393 66 L1386 64 L1393 62 Z" fill="#f0d040"/>
<text x="1369.25" y="103.25" font-size="12.3" fill="#e6e6e6" font-weight="normal" font-style="normal" textLength="32.50" lengthAdjust="spacingAndGlyphs">Group</text>
<rect x="1412" y="59" width="5" height="5" fill="none" stroke="#5fb8f0"/><circle cx="1414.5" cy="68" r="2.5" fill="none" stroke="#d0d0d0"/><path d="M1421 63 L1426 68 M1426 63 L1421 68" stroke="#f04040" stroke-width="1.5"/>
<rect x="1412" y="83" width="5" height="5" fill="none" stroke="#5fb8f0"/><circle cx="1414.5" cy="92" r="2.5" fill="none" stroke="#d0d0d0"/><path d="M1419 96 L1425 90" stroke="#f0b848" stroke-width="2.5"/>
<rect x="1406.5" y="102.5" width="23" height="21" fill="none" stroke="#4aa8e8" stroke-width="1"/><rect x="1412" y="106" width="5" height="5" fill="none" stroke="#5fb8f0"/><circle cx="1414.5" cy="115" r="2.5" fill="#50c070"/><path d="M1420 111 L1420 121 L1423 118 L1426 122" stroke="#e0e0e0" stroke-width="1.2" fill="#e0e0e0"/>
<rect x="1455" y="68" width="28" height="7" fill="#f0c050"/><path d="M1458 68 L1458 71 M1462 68 L1462 71 M1466 68 L1466 71 M1470 68 L1470 71 M1474 68 L1474 71 M1478 68 L1478 71" stroke="#8a6a20" stroke-width="0.8"/>
<text x="1446.25" y="103.25" font-size="12.3" fill="#e6e6e6" font-weight="normal" font-style="normal" textLength="45.00" lengthAdjust="spacingAndGlyphs">Measure</text>
<path d="M1465.5 108.0L1471.5 108.0L1468.5 112.0Z" fill="#d0d0d0"/>
<path d="M1507 60 L1507 73 L1510 70 L1513 75" stroke="#e0e0e0" stroke-width="1.5" fill="#e0e0e0"/><rect x="1514" y="65" width="9" height="8" fill="#5fb8f0"/><path d="M1512 57 L1514 63" stroke="#f0d040" stroke-width="2"/>
<rect x="1507.5" y="81.5" width="15" height="15" fill="none" stroke="#50c070" stroke-dasharray="2 1"/><path d="M1511 85 L1511 93 L1519 93" stroke="#50c070" stroke-width="2" fill="none"/><path d="M1516 88 L1516 98 L1519 95 L1522 99" fill="#e0e0e0"/>
<rect x="1509" y="105" width="12" height="16" fill="#c8c8c8"/><rect x="1511" y="107" width="8" height="3" fill="#3b4453"/><path d="M1511 112 L1519 112 M1511 115 L1519 115 M1511 118 L1519 118" stroke="#3b4453" stroke-width="1.3" stroke-dasharray="2 1"/>
<rect x="1544" y="58" width="18" height="26" rx="1" fill="#d8a868"/><rect x="1549" y="55" width="8" height="4" fill="#e0e0e0"/><path d="M1552 66 L1565 66 L1570 71 L1570 88 L1552 88 Z" fill="#e0e0e0"/>
<text x="1543.25" y="103.25" font-size="12.3" fill="#e6e6e6" font-weight="normal" font-style="normal" textLength="28.00" lengthAdjust="spacingAndGlyphs">Paste</text>
<path d="M1554.5 108.0L1560.5 108.0L1557.5 112.0Z" fill="#d0d0d0"/>
<rect x="1587" y="57" width="11" height="13" fill="#c8c8c8"/><circle cx="1598" cy="72" r="2" fill="none" stroke="#e0e0e0"/><circle cx="1602" cy="72" r="2" fill="none" stroke="#e0e0e0"/><path d="M1595 63 L1602 70 M1603 63 L1597 70" stroke="#e0e0e0" stroke-width="1.1"/>
<rect x="1588" y="81" width="9" height="12" fill="#c0c0c0"/><path d="M1592 85 L1600 85 L1603 88 L1603 97 L1592 97 Z" fill="#e0e0e0"/>
<path d="M1625 60 L1639 60 L1639 72 L1657 72 L1657 84 L1625 84 Z" fill="#d8d8d8"/>
<text x="1629.25" y="103.25" font-size="12.3" fill="#e6e6e6" font-weight="normal" font-style="normal" textLength="24.00" lengthAdjust="spacingAndGlyphs">Base</text>
<path d="M1638.5 108.0L1644.5 108.0L1641.5 112.0Z" fill="#d0d0d0"/></g>
<g id="drawing"><svg x="0" y="177" width="1920" height="826" viewBox="0 177 1920 826" overflow="hidden"><defs><pattern id="py" x="0" y="458" width="13.75" height="10" patternUnits="userSpaceOnUse"><g fill="#a8a000"><rect x="1.2" y="1.5" width="1.1" height="1.1"/><rect x="5.5" y="2.2" width="1.1" height="1.1"/><rect x="8.2" y="1.2" width="1.1" height="1.1"/><rect x="10.5" y="2.6" width="1.1" height="1.1"/><rect x="3.2" y="7.6" width="1.1" height="1.1"/><rect x="6.4" y="6.6" width="1.1" height="1.1"/><rect x="9.5" y="8.2" width="1.1" height="1.1"/><rect x="12.2" y="7.4" width="1.1" height="1.1"/><rect x="0.6" y="8.4" width="1.1" height="1.1"/><path d="M1.5 6.6 L3.2 2.6 L4.8 6.6 Z"/></g></pattern><pattern id="pp" x="402" y="906" width="14" height="13" patternUnits="userSpaceOnUse"><g fill="#800080"><rect x="2" y="1" width="1" height="1"/><rect x="6" y="2" width="1" height="1"/><rect x="9" y="1" width="1" height="1"/><rect x="12" y="3" width="1" height="1"/><rect x="1" y="5" width="1" height="1"/><rect x="5" y="6" width="1" height="1"/><rect x="8" y="4" width="1" height="1"/><rect x="11" y="6" width="1" height="1"/><rect x="3" y="8" width="1" height="1"/><rect x="7" y="9" width="1" height="1"/><rect x="10" y="9" width="1" height="1"/><rect x="13" y="11" width="1" height="1"/><rect x="1" y="11" width="1" height="1"/><rect x="5" y="12" width="1" height="1"/><rect x="9" y="12" width="1" height="1"/><rect x="12" y="7" width="1" height="1"/><path d="M2 4.5 L4 1.5 L6 4.5 Z"/></g></pattern><pattern id="pg" width="14" height="14" patternUnits="userSpaceOnUse" patternTransform="rotate(-22.8)"><g fill="#2f8f2f"><rect x="1.0" y="1.0" width="1.1" height="1.1"/><rect x="4.5" y="2.2" width="1.1" height="1.1"/><rect x="8.0" y="0.8" width="1.1" height="1.1"/><rect x="11.0" y="3.0" width="1.1" height="1.1"/><rect x="2.2" y="5.0" width="1.1" height="1.1"/><rect x="6.2" y="6.2" width="1.1" height="1.1"/><rect x="9.6" y="5.4" width="1.1" height="1.1"/><rect x="12.6" y="7.0" width="1.1" height="1.1"/><rect x="0.6" y="9.0" width="1.1" height="1.1"/><rect x="4.0" y="10.2" width="1.1" height="1.1"/><rect x="7.6" y="9.4" width="1.1" height="1.1"/><rect x="11.2" y="11.0" width="1.1" height="1.1"/><rect x="3.0" y="13.0" width="1.1" height="1.1"/><rect x="9.0" y="13.4" width="1.1" height="1.1"/><path d="M5.2 3.8 L6.8 1.6 L8.4 3.8 Z"/></g></pattern><pattern id="pg2" width="14" height="14" patternUnits="userSpaceOnUse" patternTransform="rotate(22.8)"><g fill="#2f8f2f"><rect x="1.0" y="1.0" width="1.1" height="1.1"/><rect x="4.5" y="2.2" width="1.1" height="1.1"/><rect x="8.0" y="0.8" width="1.1" height="1.1"/><rect x="11.0" y="3.0" width="1.1" height="1.1"/><rect x="2.2" y="5.0" width="1.1" height="1.1"/><rect x="6.2" y="6.2" width="1.1" height="1.1"/><rect x="9.6" y="5.4" width="1.1" height="1.1"/><rect x="12.6" y="7.0" width="1.1" height="1.1"/><rect x="0.6" y="9.0" width="1.1" height="1.1"/><rect x="4.0" y="10.2" width="1.1" height="1.1"/><rect x="7.6" y="9.4" width="1.1" height="1.1"/><rect x="11.2" y="11.0" width="1.1" height="1.1"/><rect x="3.0" y="13.0" width="1.1" height="1.1"/><rect x="9.0" y="13.4" width="1.1" height="1.1"/><path d="M5.2 3.8 L6.8 1.6 L8.4 3.8 Z"/></g></pattern></defs>
<rect x="0" y="177" width="1920" height="826" fill="#ffffff"/>
<rect x="240" y="945" width="1278" height="58" fill="#4b2e26"/>
<line x1="240" y1="945" x2="1518" y2="945" stroke="#9a9060" stroke-width="1.5" />
<line x1="1421" y1="945" x2="1421" y2="1003" stroke="#b8b070" stroke-width="1" />
<rect x="402" y="906" width="943" height="39" fill="url(#pp)"/>
<line x1="402" y1="906" x2="1345" y2="906" stroke="#222" stroke-width="1.3" />
<line x1="402" y1="944.8" x2="1345" y2="944.8" stroke="#111" stroke-width="1.8" />
<line x1="182" y1="242" x2="315.5" y2="242" stroke="#1a1a1a" stroke-width="1.5" /><text x="315.0" y="221.5" font-size="12.3" font-weight="bold" fill="#0000ff" textLength="33.5" lengthAdjust="spacingAndGlyphs">+9,10</text><text x="231.5" y="233.5" font-size="10.5" fill="#0000ff" text-anchor="middle" letter-spacing="0.3">ANA MAHYA</text><path d="M306.0 226 L325.0 226 L315.5 242 Z" fill="#000"/>
<line x1="1485" y1="242" x2="1617" y2="242" stroke="#1a1a1a" stroke-width="1.5" /><text x="1484.5" y="221.5" font-size="12.3" font-weight="bold" fill="#0000ff" textLength="33.5" lengthAdjust="spacingAndGlyphs">+9,10</text><text x="1568.5" y="233.5" font-size="10.5" fill="#0000ff" text-anchor="middle" letter-spacing="0.3">ANA MAHYA</text><path d="M1475.5 226 L1494.5 226 L1485 242 Z" fill="#000"/>
<line x1="182" y1="458" x2="315.5" y2="458" stroke="#1a1a1a" stroke-width="1.5" /><text x="315.0" y="437.5" font-size="12.3" font-weight="bold" fill="#0000ff" textLength="33.5" lengthAdjust="spacingAndGlyphs">+6,30</text><text x="231.5" y="449.5" font-size="10.5" fill="#0000ff" text-anchor="middle" letter-spacing="0.3">ÇATI ARASI</text><path d="M306.0 442 L325.0 442 L315.5 458 Z" fill="#000"/>
<line x1="1485" y1="458" x2="1617" y2="458" stroke="#1a1a1a" stroke-width="1.5" /><text x="1484.5" y="437.5" font-size="12.3" font-weight="bold" fill="#0000ff" textLength="33.5" lengthAdjust="spacingAndGlyphs">+6,30</text><text x="1568.5" y="449.5" font-size="10.5" fill="#0000ff" text-anchor="middle" letter-spacing="0.3">ÇATI ARASI</text><path d="M1475.5 442 L1494.5 442 L1485 458 Z" fill="#000"/>
<line x1="182" y1="682" x2="315.5" y2="682" stroke="#1a1a1a" stroke-width="1.5" /><text x="315.0" y="661.5" font-size="12.3" font-weight="bold" fill="#0000ff" textLength="33.5" lengthAdjust="spacingAndGlyphs">+3,40</text><text x="231.5" y="673.5" font-size="10.5" fill="#0000ff" text-anchor="middle" letter-spacing="0.3">1. KAT PLANI</text><path d="M306.0 666 L325.0 666 L315.5 682 Z" fill="#000"/>
<line x1="1485" y1="682" x2="1617" y2="682" stroke="#1a1a1a" stroke-width="1.5" /><text x="1484.5" y="661.5" font-size="12.3" font-weight="bold" fill="#0000ff" textLength="33.5" lengthAdjust="spacingAndGlyphs">+3,40</text><text x="1568.5" y="673.5" font-size="10.5" fill="#0000ff" text-anchor="middle" letter-spacing="0.3">1. KAT PLANI</text><path d="M1475.5 666 L1494.5 666 L1485 682 Z" fill="#000"/>
<line x1="182" y1="906" x2="315.5" y2="906" stroke="#1a1a1a" stroke-width="1.5" /><text x="315.0" y="885.5" font-size="12.3" font-weight="bold" fill="#0000ff" textLength="33.5" lengthAdjust="spacingAndGlyphs">+0,50</text><text x="303" y="903" font-size="10.5" fill="#0000ff" text-anchor="end" letter-spacing="0.2">SUBASMAN KOTU</text><path d="M306.0 890 L325.0 890 L315.5 906 Z" fill="#000"/>
<line x1="1485" y1="906" x2="1617" y2="906" stroke="#1a1a1a" stroke-width="1.5" /><text x="1484.5" y="885.5" font-size="12.3" font-weight="bold" fill="#0000ff" textLength="33.5" lengthAdjust="spacingAndGlyphs">+0,50</text><text x="1615" y="903" font-size="10.5" fill="#0000ff" text-anchor="end" letter-spacing="0.2">SUBASMAN KOTU</text><path d="M1475.5 890 L1494.5 890 L1485 906 Z" fill="#000"/>
<line x1="182" y1="944.5" x2="315.5" y2="944.5" stroke="#1a1a1a" stroke-width="1.5" /><text x="315.0" y="924.0" font-size="12.3" font-weight="bold" fill="#0000ff" textLength="33.5" lengthAdjust="spacingAndGlyphs">±0,00</text><text x="303" y="941.5" font-size="10.5" fill="#0000ff" text-anchor="end" letter-spacing="0.2">TABİ ZEMİN KOTU</text><path d="M306.0 928.5 L325.0 928.5 L315.5 944.5 Z" fill="#000"/>
<line x1="1485" y1="944.5" x2="1617" y2="944.5" stroke="#1a1a1a" stroke-width="1.5" /><text x="1484.5" y="924.0" font-size="12.3" font-weight="bold" fill="#0000ff" textLength="33.5" lengthAdjust="spacingAndGlyphs">±0,00</text><text x="1615" y="941.5" font-size="10.5" fill="#0000ff" text-anchor="end" letter-spacing="0.2">TABİ ZEMİN KOTU</text><path d="M1475.5 928.5 L1494.5 928.5 L1485 944.5 Z" fill="#000"/>
<path d="M873.4 242.1 L363.3 456.6 L369.3 471.4 L873.4 259.6704989154013 Z" fill="url(#pg)"/>
<path d="M363.3 456.6 L873.4 242.1 L1383.5 456.6" stroke="#8a3c3c" stroke-width="1.4" fill="none"/>
<path d="M364.5 460.20000000000005 L873.4 245.7 L1382.3 460.20000000000005" stroke="#4a3232" stroke-width="1.5" fill="none"/>
<path d="M369.3 471.4 L873.4 259.6704989154013" stroke="#b89a40" stroke-width="1.2" fill="none"/>
<path d="M369.3 472.59999999999997 L873.4 260.8704989154013" stroke="#5a80d0" stroke-width="0.9" fill="none"/>
<path d="M363.3 456.6 L369.3 471.4" stroke="#b89a40" stroke-width="1.2"/>
<path d="M873.4 242.1 L932 266.7413 L932 270.9 L900.8 270.9 L873.4 259.6704989154013 Z" fill="url(#pg2)"/>
<path d="M1055 318.4628 L1383.5 456.6 L1377 471.4 L1055 336.0332989154013 Z" fill="url(#pg2)"/>
<path d="M873.4 259.6704989154013 L1377 471.4" stroke="#b89a40" stroke-width="1.2" fill="none"/>
<path d="M873.4 260.8704989154013 L1377 472.6" stroke="#5a80d0" stroke-width="0.9" fill="none"/>
<path d="M1383.5 456.6 L1377 471.4" stroke="#b89a40" stroke-width="1.2"/>
<path d="M932 262.7413 L1055 314.4628 L1055 339.0332989154013 L932 287.3117989154013 Z" fill="#fff"/>
<path d="M899 271 L1060 339" stroke="#7a3a3a" stroke-width="1.1"/>
<path d="M899 270.7 L932 270.7" stroke="#b89a40" stroke-width="1.2"/>
<path d="M1055 318.4628 L1055 336.0332989154013" stroke="#b89a40" stroke-width="1.1"/>
<path d="M867.7 257 L873.4 245 L879.2 257 Z" fill="none" stroke="#b89a40" stroke-width="1.1"/>
<path d="M943 263 L1060 313 L1055 323 L938 273 Z" fill="none" stroke="#ff8a1e" stroke-width="1.3"/>
<path d="M948 265 L943 275 M1053 310 L1048 320" stroke="#ff8a1e" stroke-width="1.1"/>
<rect x="786.0040402268759" y="294" width="174.7919195462482" height="4" fill="#8a8a8a"/><rect x="786.0040402268759" y="294" width="174.7919195462482" height="1.2" fill="#222"/><rect x="786.0040402268759" y="296.8" width="174.7919195462482" height="1.2" fill="#222"/>
<rect x="694.4463707857343" y="332.5" width="357.90725842853124" height="4" fill="#8a8a8a"/><rect x="694.4463707857343" y="332.5" width="357.90725842853124" height="1.2" fill="#222"/><rect x="694.4463707857343" y="335.3" width="357.90725842853124" height="1.2" fill="#222"/>
<rect x="602.8887013445928" y="371" width="541.0225973108143" height="4" fill="#8a8a8a"/><rect x="602.8887013445928" y="371" width="541.0225973108143" height="1.2" fill="#222"/><rect x="602.8887013445928" y="373.8" width="541.0225973108143" height="1.2" fill="#222"/>
<rect x="510.14197126135855" y="410" width="726.5160574772829" height="4" fill="#8a8a8a"/><rect x="510.14197126135855" y="410" width="726.5160574772829" height="1.2" fill="#222"/><rect x="510.14197126135855" y="412.8" width="726.5160574772829" height="1.2" fill="#222"/>
<rect x="417.3952411781243" y="449" width="912.0095176437515" height="4" fill="#8a8a8a"/><rect x="417.3952411781243" y="449" width="912.0095176437515" height="1.2" fill="#222"/><rect x="417.3952411781243" y="451.8" width="912.0095176437515" height="1.2" fill="#222"/>
<line x1="709.5" y1="318" x2="709.5" y2="457" stroke="#ff5a2a" stroke-width="1.2" />
<line x1="736.5" y1="307" x2="736.5" y2="457" stroke="#ff5a2a" stroke-width="1.2" />
<line x1="948.5" y1="290" x2="948.5" y2="457" stroke="#ff5a2a" stroke-width="1.2" />
<line x1="975.5" y1="300" x2="975.5" y2="457" stroke="#ff5a2a" stroke-width="1.2" />
<rect x="712" y="318" width="23" height="157" fill="#fff"/>
<rect x="949" y="292" width="26" height="165" fill="#fff"/>
<line x1="709.5" y1="318" x2="709.5" y2="457" stroke="#ff5a2a" stroke-width="1.2" />
<line x1="736.5" y1="307" x2="736.5" y2="457" stroke="#ff5a2a" stroke-width="1.2" />
<line x1="948.5" y1="290" x2="948.5" y2="457" stroke="#ff5a2a" stroke-width="1.2" />
<line x1="975.5" y1="300" x2="975.5" y2="457" stroke="#ff5a2a" stroke-width="1.2" />
<rect x="863.5" y="306" width="16" height="152" fill="none" stroke="#ff8a1e" stroke-width="1.2" />
<line x1="869" y1="322" x2="869" y2="450" stroke="#ff8a1e" stroke-width="1.1" />
<line x1="877.5" y1="316" x2="877.5" y2="452" stroke="#ff8a1e" stroke-width="1.1" />
<path d="M869 322 L877.5 314" stroke="#ff8a1e" stroke-width="1.1"/>
<line x1="869" y1="341" x2="881" y2="341" stroke="#ff8a1e" stroke-width="1.6" />
<line x1="869" y1="368" x2="881" y2="368" stroke="#ff8a1e" stroke-width="1.6" />
<line x1="869" y1="381" x2="881" y2="381" stroke="#ff8a1e" stroke-width="1.6" />
<line x1="869" y1="393" x2="881" y2="393" stroke="#ff8a1e" stroke-width="1.6" />
<line x1="869" y1="420" x2="881" y2="420" stroke="#ff8a1e" stroke-width="1.6" />
<circle cx="866" cy="381" r="2.2" fill="none" stroke="#ff8a1e" stroke-width="1.1"/>
<line x1="908.5" y1="302" x2="908.5" y2="458" stroke="#ff8a1e" stroke-width="1.2" />
<line x1="912.5" y1="304" x2="912.5" y2="458" stroke="#ff8a1e" stroke-width="1.1" />
<line x1="929.5" y1="304" x2="929.5" y2="458" stroke="#ff8a1e" stroke-width="1.2" />
<line x1="931.5" y1="302" x2="931.5" y2="458" stroke="#ff8a1e" stroke-width="1" />
<line x1="912.5" y1="306.5" x2="929.5" y2="306.5" stroke="#ff8a1e" stroke-width="1.2" />
<line x1="918" y1="304" x2="929" y2="304" stroke="#ff8a1e" stroke-width="1.1" />
<rect x="402" y="458" width="663" height="10" fill="url(#py)"/>
<line x1="402" y1="457.3" x2="1065" y2="457.3" stroke="#d8a080" stroke-width="1" />
<line x1="402" y1="458.5" x2="1065" y2="458.5" stroke="#306030" stroke-width="1.2" />
<line x1="402" y1="467.2" x2="1065" y2="467.2" stroke="#707020" stroke-width="1.2" />
<line x1="402" y1="469.3" x2="1065" y2="469.3" stroke="#6a88c8" stroke-width="1.1" />
<rect x="711" y="466" width="19" height="31" fill="#fff"/><rect x="711" y="466" width="19" height="31" fill="url(#py)"/><path d="M711 468 L711 497 L730 497 L730 468" fill="none" stroke="#222" stroke-width="1.1"/>
<rect x="955" y="466" width="19" height="31" fill="#fff"/><rect x="955" y="466" width="19" height="31" fill="url(#py)"/><path d="M955 468 L955 497 L974 497 L974 468" fill="none" stroke="#222" stroke-width="1.1"/>
<rect x="1325" y="458" width="20" height="39" fill="url(#py)" stroke="#222" stroke-width="1"/>
<rect x="402" y="682" width="695" height="10" fill="url(#py)"/>
<line x1="402" y1="681.5" x2="1097" y2="681.5" stroke="#707020" stroke-width="1.2" />
<line x1="402" y1="691.5" x2="1097" y2="691.5" stroke="#707020" stroke-width="1.2" />
<line x1="402" y1="693.3" x2="1097" y2="693.3" stroke="#6a88c8" stroke-width="1.1" />
<rect x="711" y="690" width="19" height="31" fill="#fff"/><rect x="711" y="690" width="19" height="31" fill="url(#py)"/><path d="M711 693 L711 721 L730 721 L730 693" fill="none" stroke="#222" stroke-width="1.1"/>
<rect x="954.6" y="690" width="18.4" height="31" fill="#fff"/><rect x="954.6" y="690" width="18.4" height="31" fill="url(#py)"/><path d="M954.6 693 L954.6 721 L973 721 L973 693" fill="none" stroke="#222" stroke-width="1.1"/>
<rect x="1325" y="682" width="20" height="38" fill="url(#py)" stroke="#222" stroke-width="1"/>
<rect x="427" y="487" width="283" height="4" fill="#8a8a8a"/><rect x="427" y="487" width="283" height="1.2" fill="#222"/><rect x="427" y="489.8" width="283" height="1.2" fill="#222"/>
<rect x="427" y="526" width="283" height="4" fill="#8a8a8a"/><rect x="427" y="526" width="283" height="1.2" fill="#222"/><rect x="427" y="528.8" width="283" height="1.2" fill="#222"/>
<rect x="759" y="526" width="190" height="4" fill="#8a8a8a"/><rect x="759" y="526" width="190" height="1.2" fill="#222"/><rect x="759" y="528.8" width="190" height="1.2" fill="#222"/>
<rect x="976" y="526" width="328" height="4" fill="#8a8a8a"/><rect x="976" y="526" width="328" height="1.2" fill="#222"/><rect x="976" y="528.8" width="328" height="1.2" fill="#222"/>
<rect x="427" y="564.5" width="283" height="4" fill="#8a8a8a"/><rect x="427" y="564.5" width="283" height="1.2" fill="#222"/><rect x="427" y="567.3" width="283" height="1.2" fill="#222"/>
<rect x="759" y="564.5" width="190" height="4" fill="#8a8a8a"/><rect x="759" y="564.5" width="190" height="1.2" fill="#222"/><rect x="759" y="567.3" width="190" height="1.2" fill="#222"/>
<rect x="976" y="564.5" width="328" height="4" fill="#8a8a8a"/><rect x="976" y="564.5" width="328" height="1.2" fill="#222"/><rect x="976" y="567.3" width="328" height="1.2" fill="#222"/>
<rect x="427" y="603" width="283" height="4" fill="#8a8a8a"/><rect x="427" y="603" width="283" height="1.2" fill="#222"/><rect x="427" y="605.8" width="283" height="1.2" fill="#222"/>
<rect x="759" y="603" width="190" height="4" fill="#8a8a8a"/><rect x="759" y="603" width="190" height="1.2" fill="#222"/><rect x="759" y="605.8" width="190" height="1.2" fill="#222"/>
<rect x="976" y="603" width="328" height="4" fill="#8a8a8a"/><rect x="976" y="603" width="328" height="1.2" fill="#222"/><rect x="976" y="605.8" width="328" height="1.2" fill="#222"/>
<rect x="427" y="641.5" width="283" height="4" fill="#8a8a8a"/><rect x="427" y="641.5" width="283" height="1.2" fill="#222"/><rect x="427" y="644.3" width="283" height="1.2" fill="#222"/>
<rect x="759" y="641.5" width="190" height="4" fill="#8a8a8a"/><rect x="759" y="641.5" width="190" height="1.2" fill="#222"/><rect x="759" y="644.3" width="190" height="1.2" fill="#222"/>
<rect x="976" y="641.5" width="328" height="4" fill="#8a8a8a"/><rect x="976" y="641.5" width="328" height="1.2" fill="#222"/><rect x="976" y="644.3" width="328" height="1.2" fill="#222"/>
<rect x="427" y="711" width="283" height="4" fill="#8a8a8a"/><rect x="427" y="711" width="283" height="1.2" fill="#222"/><rect x="427" y="713.8" width="283" height="1.2" fill="#222"/>
<rect x="730" y="711" width="134" height="4" fill="#8a8a8a"/><rect x="730" y="711" width="134" height="1.2" fill="#222"/><rect x="730" y="713.8" width="134" height="1.2" fill="#222"/>
<rect x="879" y="711" width="75" height="4" fill="#8a8a8a"/><rect x="879" y="711" width="75" height="1.2" fill="#222"/><rect x="879" y="713.8" width="75" height="1.2" fill="#222"/>
<rect x="427" y="749.5" width="283" height="4" fill="#8a8a8a"/><rect x="427" y="749.5" width="283" height="1.2" fill="#222"/><rect x="427" y="752.3" width="283" height="1.2" fill="#222"/>
<rect x="730" y="749.5" width="219" height="4" fill="#8a8a8a"/><rect x="730" y="749.5" width="219" height="1.2" fill="#222"/><rect x="730" y="752.3" width="219" height="1.2" fill="#222"/>
<rect x="976" y="749.5" width="328" height="4" fill="#8a8a8a"/><rect x="976" y="749.5" width="328" height="1.2" fill="#222"/><rect x="976" y="752.3" width="328" height="1.2" fill="#222"/>
<rect x="427" y="788.5" width="283" height="4" fill="#8a8a8a"/><rect x="427" y="788.5" width="283" height="1.2" fill="#222"/><rect x="427" y="791.3" width="283" height="1.2" fill="#222"/>
<rect x="730" y="788.5" width="219" height="4" fill="#8a8a8a"/><rect x="730" y="788.5" width="219" height="1.2" fill="#222"/><rect x="730" y="791.3" width="219" height="1.2" fill="#222"/>
<rect x="976" y="788.5" width="328" height="4" fill="#8a8a8a"/><rect x="976" y="788.5" width="328" height="1.2" fill="#222"/><rect x="976" y="791.3" width="328" height="1.2" fill="#222"/>
<rect x="427" y="827" width="283" height="4" fill="#8a8a8a"/><rect x="427" y="827" width="283" height="1.2" fill="#222"/><rect x="427" y="829.8" width="283" height="1.2" fill="#222"/>
<rect x="730" y="827" width="219" height="4" fill="#8a8a8a"/><rect x="730" y="827" width="219" height="1.2" fill="#222"/><rect x="730" y="829.8" width="219" height="1.2" fill="#222"/>
<rect x="976" y="827" width="328" height="4" fill="#8a8a8a"/><rect x="976" y="827" width="328" height="1.2" fill="#222"/><rect x="976" y="829.8" width="328" height="1.2" fill="#222"/>
<rect x="427" y="866" width="283" height="4" fill="#8a8a8a"/><rect x="427" y="866" width="283" height="1.2" fill="#222"/><rect x="427" y="868.8" width="283" height="1.2" fill="#222"/>
<rect x="730" y="866" width="219" height="4" fill="#8a8a8a"/><rect x="730" y="866" width="219" height="1.2" fill="#222"/><rect x="730" y="868.8" width="219" height="1.2" fill="#222"/>
<rect x="976" y="866" width="328" height="4" fill="#8a8a8a"/><rect x="976" y="866" width="328" height="1.2" fill="#222"/><rect x="976" y="868.8" width="328" height="1.2" fill="#222"/>
<line x1="758" y1="497" x2="1304" y2="497" stroke="#c4c4c4" stroke-width="1.3" />
<line x1="1066" y1="563.5" x2="1304" y2="563.5" stroke="#c8c8c8" stroke-width="1.3" />
<line x1="977" y1="721.5" x2="1304" y2="721.5" stroke="#c4c4c4" stroke-width="1.3" />
<line x1="1097" y1="780.5" x2="1304" y2="780.5" stroke="#c8c8c8" stroke-width="1.3" />
<line x1="400.5" y1="468" x2="400.5" y2="682" stroke="#3a78c8" stroke-width="1.2" />
<line x1="418.5" y1="468" x2="418.5" y2="682" stroke="#222" stroke-width="1.3" />
<line x1="420" y1="468" x2="420" y2="682" stroke="#3a78c8" stroke-width="1" />
<line x1="427.5" y1="468" x2="427.5" y2="682" stroke="#ff5a2a" stroke-width="1.2" />
<line x1="1304.5" y1="458" x2="1304.5" y2="682" stroke="#ff5a2a" stroke-width="1.2" />
<line x1="1327.5" y1="497" x2="1327.5" y2="682" stroke="#3a78c8" stroke-width="1.1" />
<line x1="1329.5" y1="497" x2="1329.5" y2="682" stroke="#222" stroke-width="1.2" />
<line x1="1346.5" y1="458" x2="1346.5" y2="682" stroke="#3a78c8" stroke-width="1.3" />
<line x1="728.5" y1="497" x2="728.5" y2="682" stroke="#222" stroke-width="1.2" />
<line x1="729.8" y1="497" x2="729.8" y2="682" stroke="#3a78c8" stroke-width="0.9" />
<line x1="975.5" y1="468" x2="975.5" y2="682" stroke="#555" stroke-width="2.2" />
<line x1="978" y1="468" x2="978" y2="682" stroke="#ff5a2a" stroke-width="1" />
<line x1="400.5" y1="692" x2="400.5" y2="906" stroke="#3a78c8" stroke-width="1.2" />
<line x1="418.5" y1="692" x2="418.5" y2="906" stroke="#222" stroke-width="1.3" />
<line x1="420" y1="692" x2="420" y2="906" stroke="#3a78c8" stroke-width="1" />
<line x1="427.5" y1="692" x2="427.5" y2="906" stroke="#ff5a2a" stroke-width="1.2" />
<line x1="1304.5" y1="682" x2="1304.5" y2="906" stroke="#ff5a2a" stroke-width="1.2" />
<line x1="1327.5" y1="721" x2="1327.5" y2="906" stroke="#3a78c8" stroke-width="1.1" />
<line x1="1329.5" y1="721" x2="1329.5" y2="906" stroke="#222" stroke-width="1.2" />
<line x1="1346.5" y1="682" x2="1346.5" y2="906" stroke="#3a78c8" stroke-width="1.3" />
<line x1="728.5" y1="721" x2="728.5" y2="906" stroke="#222" stroke-width="1.2" />
<line x1="729.8" y1="721" x2="729.8" y2="906" stroke="#3a78c8" stroke-width="0.9" />
<line x1="975.5" y1="692" x2="975.5" y2="906" stroke="#555" stroke-width="2.2" />
<line x1="978" y1="692" x2="978" y2="906" stroke="#ff5a2a" stroke-width="1" />
<line x1="757.5" y1="497" x2="757.5" y2="682" stroke="#222" stroke-width="1.5" />
<line x1="948.5" y1="468" x2="948.5" y2="682" stroke="#ff5a2a" stroke-width="1.2" />
<line x1="948.5" y1="692" x2="948.5" y2="906" stroke="#333" stroke-width="1.2" />
<line x1="864.5" y1="692" x2="864.5" y2="745" stroke="#3a78c8" stroke-width="1.1" />
<line x1="878.5" y1="692" x2="878.5" y2="745" stroke="#3a78c8" stroke-width="1.1" />
<line x1="866" y1="692" x2="866" y2="745" stroke="#333" stroke-width="1" />
<line x1="877" y1="692" x2="877" y2="745" stroke="#333" stroke-width="1" />
<line x1="1304.5" y1="458" x2="1325" y2="458" stroke="#ff5a2a" stroke-width="1.2" />
<line x1="1304.5" y1="682" x2="1325" y2="682" stroke="#ff5a2a" stroke-width="1.2" />
<rect x="468" y="497" width="193" height="170" fill="#fff"/>
<rect x="468.5" y="497.5" width="192" height="169" fill="none" stroke="#ff8a1e" stroke-width="1.3" />
<rect x="472" y="501" width="185" height="162" fill="none" stroke="#ff8a1e" stroke-width="1" />
<rect x="476" y="504" width="177" height="155" fill="none" stroke="#ff8a1e" stroke-width="1.2" />
<line x1="562.5" y1="504" x2="562.5" y2="659" stroke="#ff8a1e" stroke-width="1.2" />
<line x1="566.5" y1="504" x2="566.5" y2="659" stroke="#ff8a1e" stroke-width="1.2" />
<line x1="476" y1="593" x2="653" y2="593" stroke="#ff8a1e" stroke-width="1.2" />
<line x1="476" y1="597" x2="653" y2="597" stroke="#ff8a1e" stroke-width="1.2" />
<line x1="476" y1="613.5" x2="562" y2="613.5" stroke="#3a9a80" stroke-width="1.1" />
<line x1="476" y1="616.5" x2="562" y2="616.5" stroke="#3a9a80" stroke-width="1.1" />
<line x1="567" y1="613.5" x2="653" y2="613.5" stroke="#3a9a80" stroke-width="1.1" />
<line x1="567" y1="616.5" x2="653" y2="616.5" stroke="#3a9a80" stroke-width="1.1" />
<rect x="770" y="497" width="115" height="62" fill="#fff"/>
<rect x="770.5" y="497.5" width="114" height="61" fill="none" stroke="#222" stroke-width="1.2" />
<rect x="772" y="499" width="111" height="58" fill="none" stroke="#ff8a1e" stroke-width="1.2" />
<rect x="775" y="502" width="105" height="52" fill="none" stroke="#ff8a1e" stroke-width="1.1" />
<rect x="985" y="497" width="71" height="185" fill="#fff"/>
<rect x="985.5" y="497.5" width="70" height="184" fill="none" stroke="#ff8a1e" stroke-width="1.1" />
<rect x="989" y="500" width="63" height="182" fill="none" stroke="#ff8a1e" stroke-width="1" />
<rect x="997" y="509" width="46" height="159" fill="none" stroke="#ff8a1e" stroke-width="1.2" />
<line x1="1012.5" y1="509" x2="1012.5" y2="668" stroke="#ff8a1e" stroke-width="1.2" />
<line x1="1028.5" y1="509" x2="1028.5" y2="668" stroke="#ff8a1e" stroke-width="1.2" />
<line x1="997" y1="548" x2="1043" y2="548" stroke="#ff8a1e" stroke-width="1.2" />
<line x1="997" y1="587" x2="1043" y2="587" stroke="#ff8a1e" stroke-width="1.2" />
<line x1="997" y1="627" x2="1043" y2="627" stroke="#ff8a1e" stroke-width="1.2" />
<line x1="997" y1="598" x2="1043" y2="598" stroke="#3a9a80" stroke-width="1" />
<line x1="997" y1="601" x2="1043" y2="601" stroke="#3a9a80" stroke-width="1" />
<line x1="1022" y1="601" x2="1022" y2="660" stroke="#3a9a80" stroke-width="1.2" />
<rect x="1160" y="498" width="115" height="59" fill="#fff"/>
<rect x="1160.5" y="498.5" width="114" height="58" fill="none" stroke="#333" stroke-width="1" />
<rect x="1162" y="500" width="111" height="55" fill="none" stroke="#ff8a1e" stroke-width="1.1" />
<rect x="1166" y="504" width="103" height="47" fill="none" stroke="#ff8a1e" stroke-width="1.1" />
<rect x="1160" y="721.5" width="115" height="57.5" fill="#fff"/>
<rect x="1160.5" y="722.0" width="114" height="56.5" fill="none" stroke="#333" stroke-width="1" />
<rect x="1162" y="723.5" width="111" height="53.5" fill="none" stroke="#ff8a1e" stroke-width="1.1" />
<rect x="1166" y="727.5" width="103" height="45.5" fill="none" stroke="#ff8a1e" stroke-width="1.1" />
<rect x="406" y="497" width="8" height="122" fill="none" stroke="#ff8a1e" stroke-width="1" />
<line x1="410" y1="497" x2="410" y2="619" stroke="#ff8a1e" stroke-width="0.8" />
<line x1="403" y1="619" x2="425" y2="619" stroke="#333" stroke-width="1.5" />
<rect x="716.5" y="490" width="6" height="175" fill="#ffc890"/>
<rect x="716.5" y="490" width="6" height="175" fill="none" stroke="#ff8a1e" stroke-width="1.2" />
<line x1="719.5" y1="492" x2="719.5" y2="663" stroke="#ff8a1e" stroke-width="0.9" />
<line x1="700" y1="665" x2="735" y2="665" stroke="#333" stroke-width="1.5" />
<rect x="449" y="720" width="231" height="186" fill="#fff"/>
<rect x="448.5" y="720.5" width="232" height="185.5" fill="none" stroke="#ff8a1e" stroke-width="1.2" />
<rect x="452.5" y="724.5" width="224" height="181.5" fill="none" stroke="#ff8a1e" stroke-width="1" />
<rect x="456.5" y="728" width="216.5" height="41.5" fill="none" stroke="#ff8a1e" stroke-width="1.2" />
<rect x="456.5" y="773" width="216.5" height="40.5" fill="none" stroke="#ff8a1e" stroke-width="1.2" />
<rect x="456.5" y="817" width="216.5" height="41.5" fill="none" stroke="#ff8a1e" stroke-width="1.2" />
<rect x="456.5" y="861.5" width="216.5" height="41.5" fill="none" stroke="#ff8a1e" stroke-width="1.2" />
<rect x="460.5" y="777" width="67" height="33" fill="none" stroke="#ff8a1e" stroke-width="1.1" />
<rect x="531" y="777" width="67" height="33" fill="none" stroke="#ff8a1e" stroke-width="1.1" />
<rect x="601.5" y="777" width="67.5" height="33" fill="none" stroke="#ff8a1e" stroke-width="1.1" />
<rect x="415.5" y="721.5" width="6" height="61" fill="none" stroke="#ff8a1e" stroke-width="1" />
<rect x="728.5" y="721" width="21" height="31" fill="none" stroke="#ff8a1e" stroke-width="1.2" />
<rect x="733" y="725" width="12" height="23" fill="none" stroke="#ff8a1e" stroke-width="1" />
<line x1="739" y1="725" x2="739" y2="748" stroke="#ff5a2a" stroke-width="1" />
<rect x="713" y="713" width="7" height="45" fill="#ffc890"/>
<rect x="713" y="713" width="7" height="45" fill="none" stroke="#ff8a1e" stroke-width="1.1" />
<line x1="705" y1="758" x2="733" y2="758" stroke="#333" stroke-width="1.5" />
<path d="M470.6 906 L469.4 853.3 Q470 835 472.2 826.7 Q474 815 477.8 810 Q480 806.5 485.6 805.6 Q535 800 585.6 805.6 Q591 806.5 593.3 810 Q597 815 598.9 826.7 Q601 835 601.7 853.3 L600.6 906" fill="#fff" stroke="#1f9a2f" stroke-width="1.3"/>
<path d="M473 853 Q474 830 479 812 Q482 806.5 488 806.5 M598 853 Q597 830 592 812 Q589 806.5 583 806.5" fill="none" stroke="#1f9a2f" stroke-width="1"/>
<rect x="476.1" y="830.6" width="118.9" height="23.8" fill="none" stroke="#1f9a2f" stroke-width="1.2" />
<rect x="492.8" y="817.2" width="18.9" height="11.1" fill="none" stroke="#1f9a2f" stroke-width="1.2" />
<rect x="560.6" y="817.2" width="18.3" height="11.1" fill="none" stroke="#1f9a2f" stroke-width="1.2" />
<path d="M476 825.5 L492.8 824 M511.7 823.5 Q536 821.5 560.6 823.5 M578.9 824 L595 825.5" fill="none" stroke="#1f9a2f" stroke-width="1.1"/>
<rect x="519.4" y="863.3" width="32.3" height="13.9" fill="none" stroke="#1f9a2f" stroke-width="1.2" />
<path d="M470 855 L500 865 L505 885.6 L565.6 885.6 L570.5 865 L601 855 M470 860.5 L497 864.5 L477.6 872.5 M601 860.5 L574 864.5 L593.4 872.5 M470 871 L490.6 887.8 L579.4 887.8 L601 871 M505 881 L565.6 881 M484.4 887.8 L484.4 906 M586.7 887.8 L586.7 906" fill="none" stroke="#1f9a2f" stroke-width="1.2"/>
<rect x="471.5" y="874" width="1" height="1.2" fill="#999"/><rect x="482.5" y="876" width="1" height="1.2" fill="#999"/><rect x="588" y="876" width="1" height="1.2" fill="#999"/><rect x="598.5" y="874" width="1" height="1.2" fill="#999"/>
<rect x="471.5" y="879" width="1" height="1.2" fill="#999"/><rect x="482.5" y="881" width="1" height="1.2" fill="#999"/><rect x="588" y="881" width="1" height="1.2" fill="#999"/><rect x="598.5" y="879" width="1" height="1.2" fill="#999"/>
<rect x="471.5" y="884" width="1" height="1.2" fill="#999"/><rect x="482.5" y="886" width="1" height="1.2" fill="#999"/><rect x="588" y="886" width="1" height="1.2" fill="#999"/><rect x="598.5" y="884" width="1" height="1.2" fill="#999"/>
<rect x="471.5" y="889" width="1" height="1.2" fill="#999"/><rect x="482.5" y="891" width="1" height="1.2" fill="#999"/><rect x="588" y="891" width="1" height="1.2" fill="#999"/><rect x="598.5" y="889" width="1" height="1.2" fill="#999"/>
<rect x="471.5" y="894" width="1" height="1.2" fill="#999"/><rect x="482.5" y="896" width="1" height="1.2" fill="#999"/><rect x="588" y="896" width="1" height="1.2" fill="#999"/><rect x="598.5" y="894" width="1" height="1.2" fill="#999"/>
<rect x="471.5" y="899" width="1" height="1.2" fill="#999"/><rect x="482.5" y="901" width="1" height="1.2" fill="#999"/><rect x="588" y="901" width="1" height="1.2" fill="#999"/><rect x="598.5" y="899" width="1" height="1.2" fill="#999"/>
<rect x="471.5" y="904" width="1" height="1.2" fill="#999"/><rect x="482.5" y="906" width="1" height="1.2" fill="#999"/><rect x="588" y="906" width="1" height="1.2" fill="#999"/><rect x="598.5" y="904" width="1" height="1.2" fill="#999"/>
<path d="M674 838 Q675 846 698 846 L710 846 L710 832 L698 832 Q675 831 674 838 Z" fill="#fff" stroke="#ff30ff" stroke-width="1.3"/>
<path d="M697 832 L697 826 L706 826 M701 826 L701 832" fill="none" stroke="#ff30ff" stroke-width="1.2"/>
<path d="M728.5 840.5 L735.5 840.5 L735.5 872 L778 872 L778 884 L770 906 L736 906 L728.5 884 Z" fill="#fff" stroke="#ff30ff" stroke-width="1.3"/>
<line x1="736" y1="876" x2="778" y2="876" stroke="#ff30ff" stroke-width="1" />
<line x1="731" y1="845" x2="733" y2="870" stroke="#ff30ff" stroke-width="1" />
<rect x="823" y="745" width="58" height="161" fill="#fff"/>
<rect x="823.5" y="746" width="44" height="160" fill="none" stroke="#ff8a1e" stroke-width="1.2" />
<rect x="867.5" y="746" width="13.5" height="160" fill="none" stroke="#ff8a1e" stroke-width="1.1" />
<line x1="826.5" y1="749" x2="826.5" y2="906" stroke="#ff8a1e" stroke-width="0.9" />
<rect x="832" y="755.6" width="28" height="127" fill="none" stroke="#ff8a1e" stroke-width="1.2" />
<line x1="846" y1="755.6" x2="846" y2="882.5" stroke="#ff8a1e" stroke-width="1.4" />
<line x1="832" y1="798" x2="860" y2="798" stroke="#ff8a1e" stroke-width="1.2" />
<line x1="832" y1="840" x2="860" y2="840" stroke="#ff8a1e" stroke-width="1.2" />
<rect x="835" y="759" width="8" height="36" fill="none" stroke="#ff8a1e" stroke-width="1" />
<rect x="835" y="801" width="8" height="36" fill="none" stroke="#ff8a1e" stroke-width="1" />
<rect x="835" y="843" width="8" height="36" fill="none" stroke="#ff8a1e" stroke-width="1" />
<rect x="849" y="759" width="8" height="36" fill="none" stroke="#ff8a1e" stroke-width="1" />
<rect x="849" y="801" width="8" height="36" fill="none" stroke="#ff8a1e" stroke-width="1" />
<rect x="849" y="843" width="8" height="36" fill="none" stroke="#ff8a1e" stroke-width="1" />
<line x1="824" y1="902" x2="867" y2="902" stroke="#ff8a1e" stroke-width="1" />
<rect x="895" y="742" width="67" height="164" fill="#fff"/>
<rect x="895.5" y="742.5" width="65" height="163.5" fill="none" stroke="#ff8a1e" stroke-width="1.2" />
<rect x="899" y="746.5" width="58" height="159.5" fill="none" stroke="#ff8a1e" stroke-width="1" />
<rect x="913.4" y="747" width="41" height="159" fill="none" stroke="#ff8a1e" stroke-width="1" />
<path d="M917.5 894.7 L917.5 768 Q934 748 951 768 L951 894.7 Z" fill="none" stroke="#ff8a1e" stroke-width="1.5"/>
<line x1="924.5" y1="758" x2="924.5" y2="894" stroke="#ff8a1e" stroke-width="1.6" />
<line x1="931" y1="758" x2="931" y2="894" stroke="#ff8a1e" stroke-width="1.6" />
<line x1="937.5" y1="758" x2="937.5" y2="894" stroke="#ff8a1e" stroke-width="1.6" />
<line x1="944" y1="758" x2="944" y2="894" stroke="#ff8a1e" stroke-width="1.6" />
<line x1="917.5" y1="783" x2="951" y2="783" stroke="#ff8a1e" stroke-width="1.4" />
<line x1="917.5" y1="811" x2="951" y2="811" stroke="#ff8a1e" stroke-width="1.4" />
<line x1="917.5" y1="839" x2="951" y2="839" stroke="#ff8a1e" stroke-width="1.4" />
<line x1="917.5" y1="867" x2="951" y2="867" stroke="#ff8a1e" stroke-width="1.4" />
<rect x="980" y="721" width="120" height="185" fill="#fff"/>
<line x1="979.8" y1="722.6" x2="979.8" y2="906" stroke="#ff8a1e" stroke-width="1.1" />
<line x1="983.9" y1="722.6" x2="983.9" y2="906" stroke="#ff8a1e" stroke-width="1.1" />
<line x1="1095.4" y1="722.6" x2="1095.4" y2="906" stroke="#ff8a1e" stroke-width="1.1" />
<line x1="1099.4" y1="722.6" x2="1099.4" y2="906" stroke="#ff8a1e" stroke-width="1.1" />
<line x1="983.9" y1="722.6" x2="1095.4" y2="722.6" stroke="#ff8a1e" stroke-width="1.1" />
<line x1="1053.2" y1="722.6" x2="1053.2" y2="906" stroke="#ff8a1e" stroke-width="1.2" />
<rect x="995.5" y="735.3" width="46.2" height="25.40000000000009" fill="none" stroke="#ff8a1e" stroke-width="1.2" />
<rect x="1060.3" y="735.3" width="28.3" height="25.40000000000009" fill="none" stroke="#ff8a1e" stroke-width="1.2" />
<rect x="995.5" y="772.6" width="46.2" height="27.399999999999977" fill="none" stroke="#ff8a1e" stroke-width="1.2" />
<rect x="1060.3" y="772.6" width="28.3" height="27.399999999999977" fill="none" stroke="#ff8a1e" stroke-width="1.2" />
<rect x="995.5" y="812.3" width="46.2" height="28.100000000000023" fill="none" stroke="#ff8a1e" stroke-width="1.2" />
<rect x="1060.3" y="812.3" width="28.3" height="28.100000000000023" fill="none" stroke="#ff8a1e" stroke-width="1.2" />
<rect x="995.5" y="852.5" width="46.2" height="26.0" fill="none" stroke="#ff8a1e" stroke-width="1.2" />
<rect x="1060.3" y="852.5" width="28.3" height="26.0" fill="none" stroke="#ff8a1e" stroke-width="1.2" />
<rect x="1049" y="823" width="2.5" height="9" fill="none" stroke="#ff8a1e" stroke-width="1" />
<rect x="1056" y="823" width="2.5" height="9" fill="none" stroke="#ff8a1e" stroke-width="1" />
<line x1="977" y1="721.5" x2="1097" y2="721.5" stroke="#c4c4c4" stroke-width="1.3" />
<path d="M1066.3 661.1 L1066.3 599.1 L1252 487 L1252 549 L1271 584 L1164.7 647.8 L1116 676 L1097 676 Z" fill="#fff"/>
<path d="M1066.3 661.1 L1066.3 599.1 L1252 487 M1066.3 661.1 L1216 573.3" fill="none" stroke="#222" stroke-width="1.1"/>
<line x1="1164.7" y1="647.8" x2="1271" y2="584" stroke="#222" stroke-width="1.1" />
<rect x="1066.6" y="669.5" width="24.0" height="4.3" fill="#fff" stroke="#333" stroke-width="1"/><path d="M1090.6 669.5 L1090.6 660.5" stroke="#333" stroke-width="1"/><rect x="1088.6" y="656.2" width="24.0" height="4.3" fill="#fff" stroke="#333" stroke-width="1"/><path d="M1112.6 656.2 L1112.6 647.3" stroke="#333" stroke-width="1"/><rect x="1110.6" y="643.0" width="24.0" height="4.3" fill="#fff" stroke="#333" stroke-width="1"/><path d="M1134.6 643.0 L1134.6 634.0" stroke="#333" stroke-width="1"/><rect x="1132.6" y="629.8" width="24.0" height="4.3" fill="#fff" stroke="#333" stroke-width="1"/><path d="M1156.6 629.8 L1156.6 620.8" stroke="#333" stroke-width="1"/><rect x="1154.6" y="616.5" width="24.0" height="4.3" fill="#fff" stroke="#333" stroke-width="1"/><path d="M1178.6 616.5 L1178.6 607.5" stroke="#333" stroke-width="1"/><rect x="1176.6" y="603.2" width="24.0" height="4.3" fill="#fff" stroke="#333" stroke-width="1"/><path d="M1200.6 603.2 L1200.6 594.3" stroke="#333" stroke-width="1"/><rect x="1198.6" y="590.0" width="24.0" height="4.3" fill="#fff" stroke="#333" stroke-width="1"/><path d="M1222.6 590.0 L1222.6 581.0" stroke="#333" stroke-width="1"/><rect x="1220.6" y="576.8" width="24.0" height="4.3" fill="#fff" stroke="#333" stroke-width="1"/>
<path d="M1097 884.2 L1097 823 L1252 710 L1252 772 L1274 800 L1135 904 L1097 905 Z" fill="#fff"/>
<path d="M1097 884.2 L1097 823 L1252 710 M1097 884.2 L1221 797" fill="none" stroke="#222" stroke-width="1.1"/>
<line x1="1135" y1="904" x2="1274" y2="800" stroke="#222" stroke-width="1.1" />
<rect x="1097.3" y="892.5" width="21.5" height="4.3" fill="#fff" stroke="#333" stroke-width="1"/><path d="M1118.8 892.5 L1118.8 882.9" stroke="#333" stroke-width="1"/><rect x="1116.0" y="878.6" width="21.5" height="4.3" fill="#fff" stroke="#333" stroke-width="1"/><path d="M1137.5 878.6 L1137.5 869.0" stroke="#333" stroke-width="1"/><rect x="1134.7" y="864.7" width="21.5" height="4.3" fill="#fff" stroke="#333" stroke-width="1"/><path d="M1156.2 864.7 L1156.2 855.1" stroke="#333" stroke-width="1"/><rect x="1153.4" y="850.8" width="21.5" height="4.3" fill="#fff" stroke="#333" stroke-width="1"/><path d="M1174.9 850.8 L1174.9 841.2" stroke="#333" stroke-width="1"/><rect x="1172.1" y="836.9" width="21.5" height="4.3" fill="#fff" stroke="#333" stroke-width="1"/><path d="M1193.6 836.9 L1193.6 827.3" stroke="#333" stroke-width="1"/><rect x="1190.8" y="823.0" width="21.5" height="4.3" fill="#fff" stroke="#333" stroke-width="1"/><path d="M1212.3 823.0 L1212.3 813.4" stroke="#333" stroke-width="1"/><rect x="1209.5" y="809.1" width="21.5" height="4.3" fill="#fff" stroke="#333" stroke-width="1"/>
<path d="M1066.1 458.7 L1087.5 458.7 L1087.5 471.8 L1110.4 471.8 L1110.4 484.6 L1131.8 484.6 L1131.8 498.4 L1153.2 498.4 L1153.2 511.2 L1174.6 511.2 L1174.6 524.4 L1197.6 524.4 L1197.6 537.5 L1219.0 537.5 L1219.0 550.4 L1241.9 550.4 L1241.9 563.2 L1329.0 563.2 L1329.0 584.0 L1235.8 584.0 L1065.1 481.6 Z" fill="#4b4a28" stroke="#1a1a1a" stroke-width="1"/>
<path d="M1097.3 682.4 L1116.6 682.4 L1116.6 696.2 L1134.9 696.2 L1134.9 710.8 L1153.2 710.8 L1153.2 725.2 L1171.6 725.2 L1171.6 739.0 L1191.5 739.0 L1191.5 753.3 L1209.8 753.3 L1209.8 767.1 L1228.1 767.1 L1228.1 780.9 L1327.5 780.9 L1327.5 800.1 L1220.5 800.1 L1096.3 706.9 Z" fill="#4b4a28" stroke="#1a1a1a" stroke-width="1"/>
<path d="M1066 388.3 L1089 388.3 L1252.6 486.2 L1252.6 548.8 L1089 451 L1066 451 Z" fill="#fff" stroke="#222" stroke-width="1.1"/>
<path d="M1097.3 613 L1115 613 L1252.6 711.5 L1252.6 772.6 L1116.6 674.8 L1097.3 674.8 Z" fill="#fff" stroke="#222" stroke-width="1.1"/>
<rect x="402" y="177" width="1" height="800" fill="#242424"/><rect x="401" y="177" width="1" height="800" fill="#000" fill-opacity="0.12"/><rect x="403" y="177" width="1" height="800" fill="#000" fill-opacity="0.08"/>
<rect x="711" y="177" width="1" height="800" fill="#242424"/><rect x="710" y="177" width="1" height="800" fill="#000" fill-opacity="0.12"/><rect x="712" y="177" width="1" height="800" fill="#000" fill-opacity="0.08"/>
<rect x="892" y="177" width="1" height="800" fill="#242424"/><rect x="891" y="177" width="1" height="800" fill="#000" fill-opacity="0.12"/><rect x="893" y="177" width="1" height="800" fill="#000" fill-opacity="0.08"/>
<rect x="974" y="177" width="1" height="800" fill="#242424"/><rect x="973" y="177" width="1" height="800" fill="#000" fill-opacity="0.12"/><rect x="975" y="177" width="1" height="800" fill="#000" fill-opacity="0.08"/>
<rect x="1151" y="177" width="1" height="800" fill="#242424"/><rect x="1150" y="177" width="1" height="800" fill="#000" fill-opacity="0.12"/><rect x="1152" y="177" width="1" height="800" fill="#000" fill-opacity="0.08"/>
<rect x="1345" y="177" width="1" height="800" fill="#242424"/><rect x="1344" y="177" width="1" height="800" fill="#000" fill-opacity="0.12"/><rect x="1346" y="177" width="1" height="800" fill="#000" fill-opacity="0.08"/>
<line x1="1819.5" y1="177" x2="1819.5" y2="1003" stroke="#8cc0f0" stroke-width="1.3" />
<line x1="1858.5" y1="177" x2="1858.5" y2="1003" stroke="#8cc0f0" stroke-width="1.3" />
<line x1="1858" y1="906" x2="1920" y2="906" stroke="#b8b070" stroke-width="1.2" />
<line x1="1858" y1="203" x2="1920" y2="203" stroke="#444" stroke-width="1.6" />
<clipPath id="vpclip"><rect x="1858" y="177" width="62" height="826"/></clipPath>
<g clip-path="url(#vpclip)"><text x="1851" y="195" font-size="11" fill="#0000ff" textLength="78" lengthAdjust="spacingAndGlyphs">MAHYA KOTU</text>
<rect x="1858.5" y="192.5" width="10.5" height="3.5" fill="#e8e8e8" stroke="#666" stroke-width="1"/>
<rect x="1881.5" y="186.5" width="8" height="8" fill="#e8e8e8" stroke="#666" stroke-width="1"/><rect x="1878.5" y="189.5" width="8" height="8" fill="#e8e8e8" stroke="#666" stroke-width="1"/><rect x="1881" y="192" width="3" height="3" fill="#666"/>
<path d="M1899 188 L1907 196 M1907 188 L1899 196" stroke="#666" stroke-width="3.2"/><path d="M1899 188 L1907 196 M1907 188 L1899 196" stroke="#ececec" stroke-width="1.8"/></g>
<path d="M681 443 L699 443 L690 458 Z" fill="#000"/><text x="689" y="437.7" font-size="12.3" font-weight="bold" fill="#0000ff" textLength="33.3" lengthAdjust="spacingAndGlyphs">+6,30</text>
<path d="M1012 443 L1030 443 L1021 458 Z" fill="#000"/><text x="1020" y="437.7" font-size="12.3" font-weight="bold" fill="#0000ff" textLength="33.3" lengthAdjust="spacingAndGlyphs">+6,30</text>
<path d="M1284 443 L1302 443 L1293 458 Z" fill="#000"/><text x="1292" y="437.7" font-size="12.3" font-weight="bold" fill="#0000ff" textLength="33.3" lengthAdjust="spacingAndGlyphs">+6,30</text>
<path d="M1284 482 L1302 482 L1293 497 Z" fill="#000"/><text x="1292" y="476.7" font-size="12.3" font-weight="bold" fill="#0000ff" textLength="33.3" lengthAdjust="spacingAndGlyphs">+5,80</text>
<path d="M1284 548 L1302 548 L1293 563 Z" fill="#000"/><text x="1292" y="542.7" font-size="12.3" font-weight="bold" fill="#0000ff" textLength="33.3" lengthAdjust="spacingAndGlyphs">+4,94</text>
<path d="M681 667 L699 667 L690 682 Z" fill="#000"/><text x="689" y="661.7" font-size="12.3" font-weight="bold" fill="#0000ff" textLength="33.3" lengthAdjust="spacingAndGlyphs">+3,40</text>
<path d="M1012 667 L1030 667 L1021 682 Z" fill="#000"/><text x="1020" y="661.7" font-size="12.3" font-weight="bold" fill="#0000ff" textLength="33.3" lengthAdjust="spacingAndGlyphs">+3,40</text>
<path d="M1284 667 L1302 667 L1293 682 Z" fill="#000"/><text x="1292" y="661.7" font-size="12.3" font-weight="bold" fill="#0000ff" textLength="33.3" lengthAdjust="spacingAndGlyphs">+3,40</text>
<path d="M1284 705 L1302 705 L1293 720 Z" fill="#000"/><text x="1292" y="699.7" font-size="12.3" font-weight="bold" fill="#0000ff" textLength="33.3" lengthAdjust="spacingAndGlyphs">+2,90</text>
<path d="M1284 764 L1302 764 L1293 779 Z" fill="#000"/><text x="1292" y="758.7" font-size="12.3" font-weight="bold" fill="#0000ff" textLength="33.3" lengthAdjust="spacingAndGlyphs">+2,13</text>
<path d="M681 891 L699 891 L690 906 Z" fill="#000"/><text x="689" y="885.7" font-size="12.3" font-weight="bold" fill="#0000ff" textLength="33.3" lengthAdjust="spacingAndGlyphs">+0,50</text>
<path d="M1012 891 L1030 891 L1021 906 Z" fill="#000"/><text x="1020" y="885.7" font-size="12.3" font-weight="bold" fill="#0000ff" textLength="33.3" lengthAdjust="spacingAndGlyphs">+0,50</text>
<line x1="343" y1="467.5" x2="402" y2="467.5" stroke="#1a1a1a" stroke-width="1.3" /><path d="M351 461.5 L344 467.5 L351 473.5" stroke="#222" stroke-width="1.3" fill="none"/><circle cx="334" cy="467.5" r="8.8" fill="#fff" stroke="#222" stroke-width="1.3"/><text x="334" y="473.0" font-size="15" font-weight="bold" fill="#0000ff" text-anchor="middle"></text>
<circle cx="334" cy="467.5" r="8.8" fill="#fff" stroke="#222" stroke-width="1.3"/><text x="334" y="473.0" font-size="15" font-weight="bold" fill="#0000ff" text-anchor="middle">1</text>
<line x1="1345" y1="468.0" x2="1403.5" y2="468.0" stroke="#1a1a1a" stroke-width="1.3" /><path d="M1395.5 462.0 L1402.5 468.0 L1395.5 474.0" stroke="#222" stroke-width="1.3" fill="none"/>
<circle cx="1412.5" cy="468.0" r="8.8" fill="#fff" stroke="#222" stroke-width="1.3"/><text x="1412.5" y="473.5" font-size="15" font-weight="bold" fill="#0000ff" text-anchor="middle">1</text>
<line x1="343" y1="501.5" x2="402" y2="501.5" stroke="#1a1a1a" stroke-width="1.3" /><path d="M351 495.5 L344 501.5 L351 507.5" stroke="#222" stroke-width="1.3" fill="none"/><circle cx="334" cy="501.5" r="8.8" fill="#fff" stroke="#222" stroke-width="1.3"/><text x="334" y="507.0" font-size="15" font-weight="bold" fill="#0000ff" text-anchor="middle"></text>
<circle cx="334" cy="501.5" r="8.8" fill="#fff" stroke="#222" stroke-width="1.3"/><text x="334" y="507.0" font-size="15" font-weight="bold" fill="#0000ff" text-anchor="middle">2</text>
<line x1="1345" y1="502.0" x2="1403.5" y2="502.0" stroke="#1a1a1a" stroke-width="1.3" /><path d="M1395.5 496.0 L1402.5 502.0 L1395.5 508.0" stroke="#222" stroke-width="1.3" fill="none"/>
<circle cx="1412.5" cy="502.0" r="8.8" fill="#fff" stroke="#222" stroke-width="1.3"/><text x="1412.5" y="507.5" font-size="15" font-weight="bold" fill="#0000ff" text-anchor="middle">2</text>
<line x1="343" y1="692" x2="402" y2="692" stroke="#1a1a1a" stroke-width="1.3" /><path d="M351 686 L344 692 L351 698" stroke="#222" stroke-width="1.3" fill="none"/><circle cx="334" cy="692" r="8.8" fill="#fff" stroke="#222" stroke-width="1.3"/><text x="334" y="697.5" font-size="15" font-weight="bold" fill="#0000ff" text-anchor="middle"></text>
<circle cx="334" cy="692" r="8.8" fill="#fff" stroke="#222" stroke-width="1.3"/><text x="334" y="697.5" font-size="15" font-weight="bold" fill="#0000ff" text-anchor="middle">1</text>
<line x1="1345" y1="692.5" x2="1403.5" y2="692.5" stroke="#1a1a1a" stroke-width="1.3" /><path d="M1395.5 686.5 L1402.5 692.5 L1395.5 698.5" stroke="#222" stroke-width="1.3" fill="none"/>
<circle cx="1412.5" cy="692.5" r="8.8" fill="#fff" stroke="#222" stroke-width="1.3"/><text x="1412.5" y="698.0" font-size="15" font-weight="bold" fill="#0000ff" text-anchor="middle">1</text>
<line x1="343" y1="726" x2="402" y2="726" stroke="#1a1a1a" stroke-width="1.3" /><path d="M351 720 L344 726 L351 732" stroke="#222" stroke-width="1.3" fill="none"/><circle cx="334" cy="726" r="8.8" fill="#fff" stroke="#222" stroke-width="1.3"/><text x="334" y="731.5" font-size="15" font-weight="bold" fill="#0000ff" text-anchor="middle"></text>
<circle cx="334" cy="726" r="8.8" fill="#fff" stroke="#222" stroke-width="1.3"/><text x="334" y="731.5" font-size="15" font-weight="bold" fill="#0000ff" text-anchor="middle">2</text>
<line x1="1345" y1="726.5" x2="1403.5" y2="726.5" stroke="#1a1a1a" stroke-width="1.3" /><path d="M1395.5 720.5 L1402.5 726.5 L1395.5 732.5" stroke="#222" stroke-width="1.3" fill="none"/>
<circle cx="1412.5" cy="726.5" r="8.8" fill="#fff" stroke="#222" stroke-width="1.3"/><text x="1412.5" y="732.0" font-size="15" font-weight="bold" fill="#0000ff" text-anchor="middle">2</text>
<line x1="564" y1="468" x2="564" y2="498" stroke="#222" stroke-width="1.2" />
<path d="M558 491 L564 498 L570 491" fill="none" stroke="#222" stroke-width="1.1"/>
<circle cx="564" cy="507" r="8.5" fill="#fff" stroke="#222" stroke-width="1.3"/><text x="564" y="512.5" font-size="15" font-weight="bold" fill="#0000ff" text-anchor="middle">7</text>
<line x1="825" y1="468" x2="825" y2="498" stroke="#222" stroke-width="1.2" />
<path d="M819 491 L825 498 L831 491" fill="none" stroke="#222" stroke-width="1.1"/>
<circle cx="825" cy="507" r="8.5" fill="#fff" stroke="#222" stroke-width="1.3"/><text x="825" y="512.5" font-size="15" font-weight="bold" fill="#0000ff" text-anchor="middle">7</text>
<line x1="1015" y1="468" x2="1015" y2="498" stroke="#222" stroke-width="1.2" />
<path d="M1009 491 L1015 498 L1021 491" fill="none" stroke="#222" stroke-width="1.1"/>
<circle cx="1015" cy="507" r="8.5" fill="#fff" stroke="#222" stroke-width="1.3"/><text x="1015" y="512.5" font-size="15" font-weight="bold" fill="#0000ff" text-anchor="middle">7</text>
<line x1="555" y1="692" x2="555" y2="723" stroke="#222" stroke-width="1.2" />
<path d="M549 716 L555 723 L561 716" fill="none" stroke="#222" stroke-width="1.1"/>
<circle cx="555" cy="732" r="8.5" fill="#fff" stroke="#222" stroke-width="1.3"/><text x="555" y="737.5" font-size="15" font-weight="bold" fill="#0000ff" text-anchor="middle">5</text>
<line x1="791" y1="692" x2="791" y2="723" stroke="#222" stroke-width="1.2" />
<path d="M785 716 L791 723 L797 716" fill="none" stroke="#222" stroke-width="1.1"/>
<circle cx="791" cy="732" r="8.5" fill="#fff" stroke="#222" stroke-width="1.3"/><text x="791" y="737.5" font-size="15" font-weight="bold" fill="#0000ff" text-anchor="middle">6</text>
<line x1="1013" y1="692" x2="1013" y2="723" stroke="#222" stroke-width="1.2" />
<path d="M1007 716 L1013 723 L1019 716" fill="none" stroke="#222" stroke-width="1.1"/>
<circle cx="1013" cy="732" r="8.5" fill="#fff" stroke="#222" stroke-width="1.3"/><text x="1013" y="737.5" font-size="15" font-weight="bold" fill="#0000ff" text-anchor="middle">6</text>
<text x="511.9" y="585.6" font-size="15.5" fill="#0000ff" textLength="99.6" lengthAdjust="spacingAndGlyphs">KIŞ BAHÇESİ</text>
<text x="819.9" y="587.3" font-size="15.5" fill="#0000ff" textLength="34.9" lengthAdjust="spacingAndGlyphs">ODA</text>
<text x="1018.2" y="587.3" font-size="15.5" fill="#0000ff" textLength="31.5" lengthAdjust="spacingAndGlyphs">HOL</text>
<text x="537.4" y="811.7" font-size="15.5" fill="#0000ff" textLength="53.1" lengthAdjust="spacingAndGlyphs">GARAJ</text>
<text x="764.8" y="811.6" font-size="15.5" fill="#0000ff" textLength="61.9" lengthAdjust="spacingAndGlyphs">WC-LVB</text>
<text x="988.3" y="810.7" font-size="15.5" fill="#0000ff" textLength="91.7" lengthAdjust="spacingAndGlyphs">GİRİŞ HOLÜ</text>
<text x="885.9" y="208.9" font-size="16" font-weight="bold" fill="#0000ff" textLength="98.3" lengthAdjust="spacingAndGlyphs">BETON ÇATI</text>
<text x="898.9" y="221" font-size="10.5" font-weight="normal" fill="#0000ff" textLength="72.1" lengthAdjust="spacingAndGlyphs">ÇATI ÖRTÜSÜ</text>
<text x="905.6" y="231" font-size="10.5" font-weight="normal" fill="#0000ff" textLength="107.9" lengthAdjust="spacingAndGlyphs">IZOCAM SU YALITIMI</text>
<text x="905.6" y="247.7" font-size="10.5" font-weight="normal" fill="#0000ff" textLength="99.7" lengthAdjust="spacingAndGlyphs">KAPLAMA TAHTASI</text>
<text x="904.7" y="261.6" font-size="10.5" font-weight="normal" fill="#0000ff" textLength="211.0" lengthAdjust="spacingAndGlyphs">HAVALANDIRILAN ÇATI ARASI BOŞLUĞU</text>
<text x="1106.7" y="268" font-size="10.5" font-weight="normal" fill="#0000ff" textLength="303.3" lengthAdjust="spacingAndGlyphs">İZOCAM (MERTEK ARASI ÇİTESİ, RULOPAN, ÇATI ŞİLTESİ)</text>
<text x="1114.3" y="283" font-size="10.5" font-weight="normal" fill="#0000ff" textLength="65.7" lengthAdjust="spacingAndGlyphs">B.A DÖŞEME</text>
<text x="1116.7" y="300" font-size="10.5" font-weight="normal" fill="#0000ff" textLength="25.0" lengthAdjust="spacingAndGlyphs">SIVA</text>
<line x1="1065" y1="202" x2="1065" y2="336" stroke="#333" stroke-width="1.3" />
<line x1="1065" y1="202.5" x2="1110" y2="202.5" stroke="#333" stroke-width="1.3" />
<line x1="1065" y1="218" x2="1110" y2="218" stroke="#333" stroke-width="1.3" />
<line x1="1065" y1="233.5" x2="1110" y2="233.5" stroke="#333" stroke-width="1.3" />
<line x1="1065" y1="249" x2="1110" y2="249" stroke="#333" stroke-width="1.3" />
<line x1="1065" y1="264.5" x2="1110" y2="264.5" stroke="#333" stroke-width="1.3" />
<line x1="1065" y1="280" x2="1110" y2="280" stroke="#333" stroke-width="1.3" />
<line x1="1065" y1="295.5" x2="1110" y2="295.5" stroke="#333" stroke-width="1.3" />
<path d="M17.5 900 L17.5 986.5 L66 986.5 Z" fill="none" stroke="#3a6ae8" stroke-width="1.3"/>
<path d="M17.5 978 L25.5 978 L25.5 986.5" fill="none" stroke="#3a6ae8" stroke-width="1.2"/>
<path d="M20 927 L25 933 L30 927 M25 933 L25 939 M45 973 L55 984 M55 973 L45 984" fill="none" stroke="#3a6ae8" stroke-width="1.2"/>
<line x1="1660" y1="665.5" x2="1757" y2="665.5" stroke="#222" stroke-width="1.2" />
<line x1="1708.5" y1="617" x2="1708.5" y2="714" stroke="#222" stroke-width="1.2" />
<rect x="1705.5" y="662.5" width="6" height="6" fill="#fff" stroke="#222" stroke-width="1"/></svg></g>
<g id="cmd"><rect x="387" y="976" width="56" height="26" rx="3" fill="#2c2a2e" fill-opacity="0.85"/>
<path d="M392 981 L392 998 M395 981 L395 998" stroke="#d0d0d0" stroke-width="2" stroke-dasharray="2 1.3"/>
<path d="M401.5 984 L409.5 992 M409.5 984 L401.5 992" stroke="#d8d8d8" stroke-width="1.5"/>
<path d="M423 997 L431 988 M428 986 Q430 981 436 983 L433 986 L435 988 L438 985 Q439 991 433 991" stroke="#d0d0d0" stroke-width="1.6" fill="none"/>
<path d="M443 980 Q443 977 446 977 L1518 977 L1518 1002 L446 1002 Q443 1002 443 999 Z" fill="#ffffff" fill-opacity="0.7"/>
<path d="M1518 977 L1529 977 Q1532 977 1532 980 L1532 999 Q1532 1002 1529 1002 L1518 1002" fill="#fff" stroke="#666" stroke-width="0.8"/>
<path d="M1521 991 L1524.5 987.5 L1528 991 Z" fill="#999"/>
<rect x="447.5" y="984.5" width="15" height="11" fill="none" stroke="#555" stroke-width="1"/><path d="M448 986.5 L462 986.5" stroke="#555" stroke-width="1.5"/><path d="M450 989 L452.5 991 L450 993 M453.5 993.5 L456 993.5" stroke="#555" stroke-width="0.9" fill="none"/>
<path d="M465 988 L471 988 L468 992 Z" fill="#666"/>
<text x="480" y="994" font-size="12.5" font-style="italic" fill="#6a6a6a" textLength="97" lengthAdjust="spacingAndGlyphs" xml:space="preserve">Type  a  command</text></g>
<g id="bottom"><rect x="0" y="1003" width="1920" height="29" fill="#222933"/>
<path d="M8 1003 Q13 1003 15 1010 L17 1017 Q19 1021 24 1021 L60 1021 Q66 1021 66 1015 L66 1003 Z" fill="#2e3643"/>
<path d="M66 1003 Q71 1003 73 1010 L75 1017 Q77 1021 82 1021 L162 1021 Q168 1021 170 1015 L172 1008 Q174 1003 180 1003 Z" fill="#3b4453"/>
<path d="M177 1020 L179 1012 Q181 1004 188 1004 L198 1004 Q196 1012 194 1016 Q192 1020 186 1020 Z" fill="#2e3643"/>
<text x="23.7" y="1016.5" font-size="12.3" fill="#c8ccd2" font-weight="normal" font-style="normal" textLength="33.20" lengthAdjust="spacingAndGlyphs">Model</text>
<text x="80.6" y="1016.5" font-size="12.3" fill="#ffffff" font-weight="bold" font-style="normal" textLength="79.60" lengthAdjust="spacingAndGlyphs">Master Pafta 1</text>
<path d="M187.5 1007 L187.5 1017 M182.5 1012 L192.5 1012" stroke="#b0b4ba" stroke-width="1.6"/>
<rect x="1433" y="1005" width="40" height="24" fill="#3b4453"/>
<rect x="1476" y="1005" width="103" height="24" fill="#3b4453"/>
<rect x="1628" y="1005" width="17" height="24" fill="#3b4453"/>
<rect x="1648" y="1005" width="71" height="24" fill="#3b4453"/>
<rect x="1723" y="1005" width="39" height="24" fill="#3b4453"/>
<rect x="1764" y="1005" width="24" height="24" fill="#3b4453"/>
<rect x="1791" y="1005" width="23" height="24" fill="#3b4453"/>
<rect x="1818" y="1005" width="48" height="24" fill="#3b4453"/>
<rect x="1870" y="1005" width="50" height="24" fill="#3b4453"/>
<rect x="1582" y="1006" width="22" height="22" fill="#6190c3"/><rect x="1606" y="1006" width="22" height="22" fill="#6190c3"/>
<text x="1436" y="1021.5" font-size="11.5" fill="#f0f0f0" font-weight="normal" font-style="normal" textLength="34.00" lengthAdjust="spacingAndGlyphs">PAPER</text>
<path d="M1481 1011 L1481 1023 L1495 1023 M1481 1019 L1485 1019 L1485 1023" stroke="#d8d8d8" stroke-width="1.2" fill="none"/>
<circle cx="1511" cy="1017" r="6" fill="none" stroke="#d8d8d8" stroke-width="1.2"/><path d="M1505 1017 L1518 1017 M1511 1017 L1518 1010" stroke="#d8d8d8" stroke-width="1.2"/>
<path d="M1528.5 1015.0L1535.5 1015.0L1532 1019.0Z" fill="#d0d0d0"/>
<path d="M1545 1010 L1557 1025" stroke="#e04040" stroke-width="1.3"/><path d="M1551 1009 L1551 1026" stroke="#40c040" stroke-width="1.3"/><circle cx="1551" cy="1017" r="1.5" fill="#e0e0e0"/>
<path d="M1568.5 1015.0L1575.5 1015.0L1572 1019.0Z" fill="#d0d0d0"/>
<path d="M1585 1022.5 L1596.5 1011 M1585 1022.5 L1602 1022.5" stroke="#ffffff" stroke-width="1.3"/><rect x="1589.5" y="1014.5" width="3.5" height="3.5" fill="#fff"/>
<rect x="1610.5" y="1010.5" width="14" height="14" fill="none" stroke="#ffffff" stroke-width="1.3"/><rect x="1608" y="1008" width="4" height="4" fill="#6190c3" stroke="#fff"/>
<path d="M1633.5 1015.0L1640.5 1015.0L1637 1019.0Z" fill="#d0d0d0"/>
<rect x="1652.5" y="1009.5" width="15" height="15" fill="none" stroke="#d8d8d8" stroke-dasharray="2 1.5"/><rect x="1656.5" y="1013.5" width="8" height="8" fill="none" stroke="#d8d8d8"/>
<path d="M1678 1025 L1684 1010 L1690 1025 L1684 1020 Z" fill="#d8d8d8"/><circle cx="1691" cy="1012" r="2.5" fill="none" stroke="#d8d8d8"/>
<path d="M1700 1025 L1706 1010 L1712 1025 L1706 1020 Z" fill="#d8d8d8"/><path d="M1710 1008 L1713 1013 L1711 1013 L1714 1018" stroke="#d8d8d8" fill="none"/>
<circle cx="1734" cy="1017" r="6" fill="none" stroke="#d8d8d8" stroke-width="3" stroke-dasharray="2.5 1.5"/><circle cx="1734" cy="1017" r="3.5" fill="#d8d8d8"/><circle cx="1734" cy="1017" r="1.5" fill="#3b4453"/>
<path d="M1751.5 1015.0L1758.5 1015.0L1755 1019.0Z" fill="#d0d0d0"/>
<path d="M1776 1009 L1776 1025 M1768 1017 L1784 1017" stroke="#d8d8d8" stroke-width="1.8"/>
<rect x="1795.5" y="1009.5" width="6" height="6" fill="none" stroke="#d8d8d8"/><circle cx="1807" cy="1013" r="3.5" fill="none" stroke="#d8d8d8"/><path d="M1801 1019 L1797 1025 L1805 1025 Z" fill="none" stroke="#d8d8d8"/>
<path d="M1821 1012 L1830 1012 L1832 1015 L1832 1025 L1821 1025 Z" fill="#5fb8f0"/><path d="M1821 1020 L1828 1020 L1828 1025 L1821 1025 Z" fill="#f0b848"/><path d="M1831 1016 L1836 1026 L1826 1026 Z" fill="#f0c020"/>
<rect x="1845.5" y="1009.5" width="15" height="12" fill="none" stroke="#c0c0c0"/><path d="M1847 1018 L1851 1013 L1855 1017 L1859 1012" stroke="#c0c0c0" fill="none"/><path d="M1857 1016 L1862 1026 L1852 1026 Z" fill="#f08040"/>
<rect x="1873.5" y="1010.5" width="15" height="13" fill="none" stroke="#d8d8d8" stroke-width="1.2"/><path d="M1876 1021 L1881 1016 M1881 1016 L1886 1012" stroke="#d8d8d8"/>
<path d="M1898 1010.5 L1914 1010.5 M1898 1017 L1914 1017 M1898 1023.5 L1914 1023.5" stroke="#d8d8d8" stroke-width="1.8"/>
<rect x="0" y="1032" width="1920" height="48" fill="#dbdbdb"/>
<rect x="1162" y="1037" width="38" height="38" rx="4" fill="#f0f0f0"/>
<rect x="1174" y="1073" width="15" height="3" rx="1.5" fill="#1a73c8"/>
<rect x="958" y="1073.5" width="6" height="2.5" rx="1.2" fill="#7a7a7a"/><rect x="1134" y="1073.5" width="6" height="2.5" rx="1.2" fill="#7a7a7a"/>
<rect x="729" y="1045" width="11" height="11" fill="#1d8fe0"/><rect x="741" y="1045" width="11" height="11" fill="#28a0f0"/><rect x="729" y="1057" width="11" height="11" fill="#1480d8"/><rect x="741" y="1057" width="11" height="11" fill="#1a8ee8"/>
<circle cx="787" cy="1054" r="8" fill="none" stroke="#1a1a1a" stroke-width="2.2"/><path d="M781 1060 L775 1067" stroke="#1a1a1a" stroke-width="2.8"/>
<rect x="823" y="1045" width="17" height="15" fill="#f8f8f8" stroke="#c8c8c8" stroke-width="0.5"/><rect x="817" y="1053" width="17" height="15" fill="#202020"/><rect x="823" y="1053" width="11" height="8" fill="#b8b8b8"/>
<rect x="861" y="1045" width="24" height="22" rx="2" fill="#1a5fb4"/><rect x="863" y="1047" width="9" height="18" fill="#f4f4f4"/><rect x="874" y="1047" width="9" height="9" fill="#5ab0f0"/><rect x="874" y="1057" width="9" height="8" fill="#2b8ae0"/>
<circle cx="917" cy="1056" r="11.5" fill="#7a6ad8"/><path d="M908 1063 L905 1069 L913 1066 Z" fill="#7a6ad8"/><rect x="910" y="1052" width="10" height="8" rx="1.5" fill="#fff"/><path d="M920 1056 L925 1052 L925 1060 Z" fill="#fff"/>
<path d="M949 1045 L957 1045 L959 1047 L973 1047 L973 1067 L949 1067 Z" fill="#e8b02a"/><rect x="949" y="1050" width="24" height="17" fill="#f8d050"/><rect x="955" y="1058" width="12" height="7" rx="1" fill="#1a78c8"/>
<circle cx="1005" cy="1056" r="12" fill="#2ab0a0"/><path d="M993 1056 A12 12 0 0 1 1017 1056 Q1013 1050 1005 1052 Q997 1055 1000 1066 Q993 1062 993 1056 Z" fill="#30a0e8"/><path d="M1017 1056 Q1016 1064 1008 1067 Q1013 1060 1005 1058" fill="#1a70c8"/><circle cx="999" cy="1060" r="4" fill="#888"/>
<rect x="1037" y="1047" width="23" height="21" rx="2.5" fill="#1a4f9c"/><path d="M1043 1048 Q1043 1043 1048.5 1043 Q1054 1043 1054 1048" stroke="#5ab0f0" stroke-width="1.8" fill="none"/><rect x="1044" y="1053" width="4" height="4" fill="#f25022"/><rect x="1049" y="1053" width="4" height="4" fill="#7fba00"/><rect x="1044" y="1058" width="4" height="4" fill="#00a4ef"/><rect x="1049" y="1058" width="4" height="4" fill="#ffb900"/>
<rect x="1081" y="1044" width="24" height="24" rx="1.5" fill="#107c10"/><circle cx="1093" cy="1056" r="9" fill="#f4f4f4"/><path d="M1087 1049 Q1093 1055 1099 1063 M1099 1049 Q1093 1055 1087 1063" stroke="#107c10" stroke-width="3"/>
<circle cx="1137" cy="1056" r="11.5" fill="#e33b2e"/><path d="M1137 1056 L1147 1050 A11.5 11.5 0 0 1 1137 1067.5 Z" fill="#f5c518"/><path d="M1137 1056 L1137 1067.5 A11.5 11.5 0 0 1 1127 1050 Z" fill="#1e9e4a"/><circle cx="1137" cy="1056" r="5" fill="#fff"/><circle cx="1137" cy="1056" r="4" fill="#2a7ae8"/>
<rect x="1170" y="1045" width="23" height="23" fill="#f7dcd8"/><path d="M1172 1067 L1179 1046 L1185 1046 L1192 1067 L1187 1067 L1185.5 1061 L1178.5 1061 L1177 1067 Z M1179.5 1057 L1184.5 1057 L1182 1050 Z" fill="#c41e2a"/>
<path d="M1687 1059 L1692 1054 L1697 1059" stroke="#1a1a1a" stroke-width="1.3" fill="none"/>
<path d="M1708 1061 Q1707 1055 1712 1055 Q1714 1050 1719 1052 Q1724 1052 1724 1057 Q1726 1058 1725 1061 Z" fill="none" stroke="#1a1a1a" stroke-width="1.2"/>
<path d="M1737 1053 Q1744 1046 1751 1053 M1739.5 1056 Q1744 1051 1748.5 1056 M1742 1059 Q1744 1057 1746 1059" stroke="#1a1a1a" stroke-width="1.3" fill="none"/><circle cx="1744" cy="1061" r="1.2" fill="#1a1a1a"/>
<path d="M1760 1053 L1763 1053 L1767 1049 L1767 1063 L1763 1059 L1760 1059 Z" fill="none" stroke="#1a1a1a" stroke-width="1.1"/><path d="M1770 1052 Q1773 1056 1770 1060 M1773 1050 Q1777 1056 1773 1062" stroke="#888" stroke-width="1" fill="none"/>
<path d="M1786 1052 L1786 1056 M1790 1052 L1790 1056" stroke="#1a1a1a" stroke-width="1.3"/><rect x="1784" y="1056" width="8" height="4" fill="#1a1a1a"/><rect x="1792.5" y="1052.5" width="8" height="8" fill="none" stroke="#1a1a1a" stroke-width="1.2"/><rect x="1794" y="1054" width="4" height="5" fill="#1a1a1a"/>
<text x="1874" y="1053" font-size="12" fill="#1a1a1a" font-weight="normal" font-style="normal" text-anchor="end" >15:51</text>
<text x="1872" y="1068" font-size="12" fill="#1a1a1a" font-weight="normal" font-style="normal" text-anchor="end" >27.02.2022</text>
<circle cx="1892" cy="1056" r="8" fill="#1a73c8"/><text x="1892" y="1060.5" font-size="11" fill="#fff" font-weight="normal" font-style="normal" text-anchor="middle" >1</text></g>
</svg>
</body></html>
